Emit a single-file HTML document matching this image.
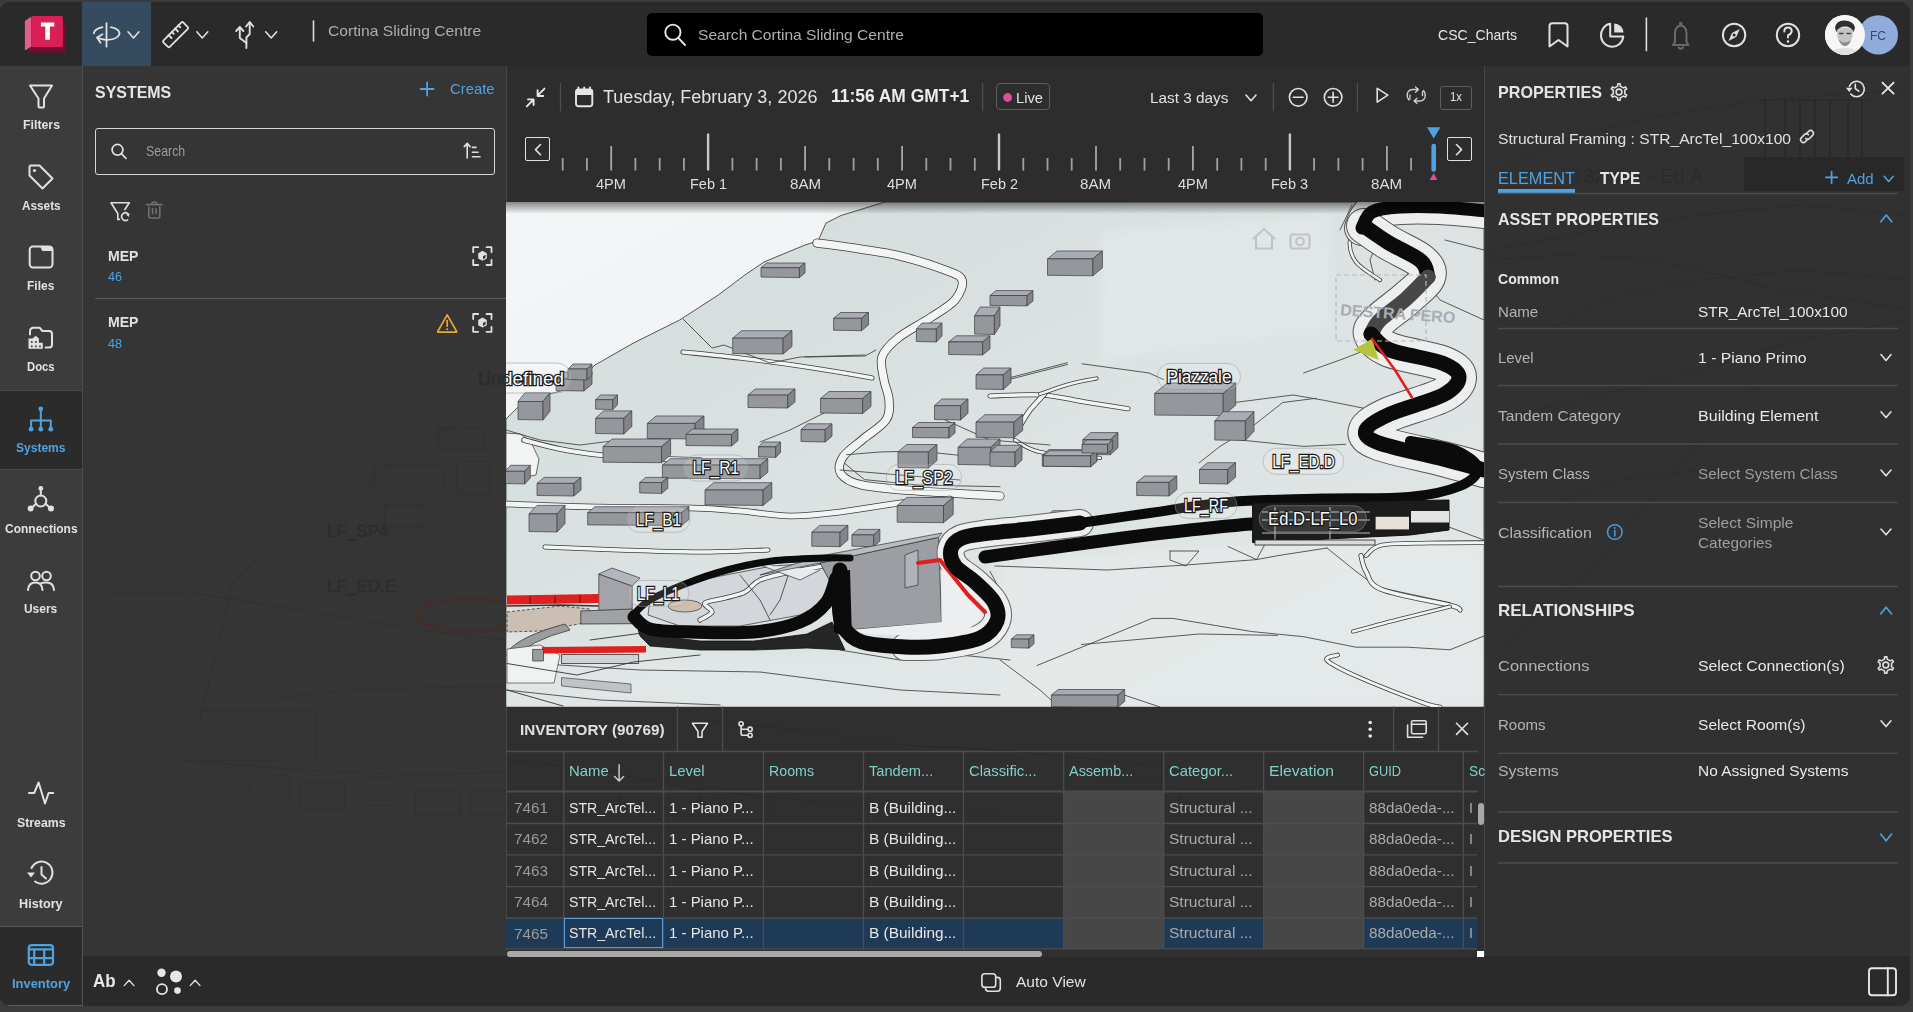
<!DOCTYPE html>
<html><head><meta charset="utf-8">
<style>
*{box-sizing:border-box;margin:0;padding:0}
html,body{width:1913px;height:1012px;overflow:hidden;background:#3c3c3c;font-family:"Liberation Sans",sans-serif}
.a{position:absolute}
.t{position:absolute;white-space:nowrap;line-height:1;transform-origin:0 0}
#win{position:absolute;left:0;top:2px;width:1910px;height:1004px;border-radius:10px;overflow:hidden;background:#2a2a2a}
svg{display:block;overflow:visible}
</style></head>
<body>
<div id="win"><div class="a" style="left:0;top:-2px;width:1910px;height:1012px">
<div class="a" style="left:0px;top:0px;width:1910px;height:66px;background:#2a2a2a;"></div>
<div class="a" style="left:82px;top:2px;width:69px;height:64px;background:#344b60;"></div>
<div class="a" style="left:0px;top:66px;width:82px;height:940px;background:#3c3c3c;"></div>
<div class="a" style="left:83px;top:66px;width:423px;height:890px;background:#353535;"></div>
<div class="a" style="left:81.8px;top:66px;width:1.5px;height:890px;background:#4b4b4b;"></div>
<svg class="a" style="left:506px;top:202px;overflow:hidden" width="978" height="505" viewBox="506 202 978 505"><defs>
<linearGradient id="sky" x1="0" y1="0" x2="1" y2="1"><stop offset="0" stop-color="#f3f5f6"/><stop offset="1" stop-color="#eceff0"/></linearGradient>
<linearGradient id="shadowT" x1="0" y1="0" x2="0" y2="1"><stop offset="0" stop-color="#000" stop-opacity="0.45"/><stop offset="1" stop-color="#000" stop-opacity="0"/></linearGradient>
<linearGradient id="terr" x1="0" y1="0" x2="1" y2="1"><stop offset="0" stop-color="#d3dcdb"/><stop offset="0.5" stop-color="#dce3e2"/><stop offset="1" stop-color="#e2e7e7"/></linearGradient>
<filter id="blur3"><feGaussianBlur stdDeviation="6"/></filter>
</defs><rect x="506" y="202" width="978" height="505" fill="url(#sky)"/><path d="M506.0 419.0 L517.8 407.4 L547.4 394.5 L571.8 388.0 L595.0 365.0 L633.5 343.0 L679.7 320.0 L718.3 295.0 L744.6 275.2 L764.0 262.0 L805.0 245.0 L818.0 241.0 L826.0 223.0 L841.0 215.5 L885.0 202.0 L1484.0 202.0 L1484.0 707.0 L506.0 707.0 Z" fill="url(#terr)" stroke="#444" stroke-width="0.9" /><g filter="url(#blur3)" opacity="0.8"><path d="M1000.0 560.0 L1250.0 545.0 L1484.0 540.0 L1484.0 707.0 L1000.0 707.0 Z" fill="#e6eaea" stroke="none" stroke-width="0.8" /><path d="M1100.0 230.0 L1330.0 215.0 L1330.0 330.0 L1100.0 360.0 Z" fill="#e3e8e8" stroke="none" stroke-width="0.8" /><path d="M506.0 640.0 L700.0 660.0 L1000.0 650.0 L1000.0 707.0 L506.0 707.0 Z" fill="#e2e7e7" stroke="none" stroke-width="0.8" /></g><path d="M506.0 433.0 L520.0 434.0 L530.0 440.0 L539.0 459.0 L536.0 475.0 L520.0 478.0 L506.0 470.0 Z" fill="#f2f4f4" stroke="#444" stroke-width="0.8" /><path d="M817.0 243.0 C824.2 244.0 846.2 246.8 860.0 249.0 C873.8 251.2 885.8 252.5 900.0 256.0 C914.2 259.5 934.7 266.0 945.0 270.0 C955.3 274.0 960.3 275.0 962.0 280.0 C963.7 285.0 960.3 293.7 955.0 300.0 C949.7 306.3 939.5 311.7 930.0 318.0 C920.5 324.3 906.0 331.5 898.0 338.0 C890.0 344.5 884.3 350.0 882.0 357.0 C879.7 364.0 882.8 372.8 884.0 380.0 C885.2 387.2 888.7 393.3 889.0 400.0 C889.3 406.7 890.5 413.3 886.0 420.0 C881.5 426.7 869.2 433.8 862.0 440.0 C854.8 446.2 846.5 451.3 843.0 457.0 C839.5 462.7 837.8 469.3 841.0 474.0 C844.2 478.7 849.2 482.2 862.0 485.0 C874.8 487.8 895.0 489.2 918.0 491.0 C941.0 492.8 986.3 495.2 1000.0 496.0" fill="none" stroke="#3c3c3c" stroke-width="9.1" stroke-linecap="round" stroke-linejoin="round"/><path d="M817.0 243.0 C824.2 244.0 846.2 246.8 860.0 249.0 C873.8 251.2 885.8 252.5 900.0 256.0 C914.2 259.5 934.7 266.0 945.0 270.0 C955.3 274.0 960.3 275.0 962.0 280.0 C963.7 285.0 960.3 293.7 955.0 300.0 C949.7 306.3 939.5 311.7 930.0 318.0 C920.5 324.3 906.0 331.5 898.0 338.0 C890.0 344.5 884.3 350.0 882.0 357.0 C879.7 364.0 882.8 372.8 884.0 380.0 C885.2 387.2 888.7 393.3 889.0 400.0 C889.3 406.7 890.5 413.3 886.0 420.0 C881.5 426.7 869.2 433.8 862.0 440.0 C854.8 446.2 846.5 451.3 843.0 457.0 C839.5 462.7 837.8 469.3 841.0 474.0 C844.2 478.7 849.2 482.2 862.0 485.0 C874.8 487.8 895.0 489.2 918.0 491.0 C941.0 492.8 986.3 495.2 1000.0 496.0" fill="none" stroke="#f3f5f5" stroke-width="7.5" stroke-linecap="round" stroke-linejoin="round"/><path d="M683.0 352.0 C692.5 353.0 720.5 355.7 740.0 358.0 C759.5 360.3 781.7 363.3 800.0 366.0 C818.3 368.7 838.0 372.0 850.0 374.0 C862.0 376.0 868.3 377.3 872.0 378.0" fill="none" stroke="#3c3c3c" stroke-width="5.1" stroke-linecap="round" stroke-linejoin="round"/><path d="M683.0 352.0 C692.5 353.0 720.5 355.7 740.0 358.0 C759.5 360.3 781.7 363.3 800.0 366.0 C818.3 368.7 838.0 372.0 850.0 374.0 C862.0 376.0 868.3 377.3 872.0 378.0" fill="none" stroke="#f3f5f5" stroke-width="3.5" stroke-linecap="round" stroke-linejoin="round"/><path d="M524.0 440.0 C530.0 441.5 547.3 446.5 560.0 449.0 C572.7 451.5 586.7 453.5 600.0 455.0 C613.3 456.5 623.3 457.2 640.0 458.0 C656.7 458.8 690.0 459.7 700.0 460.0" fill="none" stroke="#3c3c3c" stroke-width="5.6" stroke-linecap="round" stroke-linejoin="round"/><path d="M524.0 440.0 C530.0 441.5 547.3 446.5 560.0 449.0 C572.7 451.5 586.7 453.5 600.0 455.0 C613.3 456.5 623.3 457.2 640.0 458.0 C656.7 458.8 690.0 459.7 700.0 460.0" fill="none" stroke="#f3f5f5" stroke-width="4" stroke-linecap="round" stroke-linejoin="round"/><path d="M506.0 504.0 C519.2 504.4 554.0 506.0 585.0 506.7 C616.0 507.4 666.0 507.3 691.8 508.0 C717.6 508.7 723.6 509.7 740.0 511.0 C756.4 512.3 773.3 515.8 790.0 516.0 C806.7 516.2 821.7 514.2 840.0 512.0 C858.3 509.8 881.7 505.2 900.0 503.0 C918.3 500.8 941.7 499.7 950.0 499.0" fill="none" stroke="#3c3c3c" stroke-width="6.6" stroke-linecap="round" stroke-linejoin="round"/><path d="M506.0 504.0 C519.2 504.4 554.0 506.0 585.0 506.7 C616.0 507.4 666.0 507.3 691.8 508.0 C717.6 508.7 723.6 509.7 740.0 511.0 C756.4 512.3 773.3 515.8 790.0 516.0 C806.7 516.2 821.7 514.2 840.0 512.0 C858.3 509.8 881.7 505.2 900.0 503.0 C918.3 500.8 941.7 499.7 950.0 499.0" fill="none" stroke="#f3f5f5" stroke-width="5" stroke-linecap="round" stroke-linejoin="round"/><path d="M845.0 463.6 L864.5 479.6 L918.0 485.0 L1000.0 486.7" fill="none" stroke="#404040" stroke-width="0.85" stroke-linejoin="round" stroke-linecap="round" /><path d="M846.7 454.7 L880.0 452.0 L918.0 451.0 L953.4 454.7 L1000.0 460.0" fill="none" stroke="#404040" stroke-width="0.85" stroke-linejoin="round" stroke-linecap="round" /><path d="M760.0 442.0 L790.0 430.0 L830.0 410.0 L855.0 395.0" fill="none" stroke="#404040" stroke-width="0.85" stroke-linejoin="round" stroke-linecap="round" /><path d="M506.0 430.0 L540.0 440.0 L580.0 445.0 L620.0 440.0" fill="none" stroke="#404040" stroke-width="0.85" stroke-linejoin="round" stroke-linecap="round" /><path d="M545.0 547.0 C557.5 547.5 594.2 549.2 620.0 550.0 C645.8 550.8 675.3 552.0 700.0 552.0 C724.7 552.0 756.7 550.3 768.0 550.0" fill="none" stroke="#3c3c3c" stroke-width="5.1" stroke-linecap="round" stroke-linejoin="round"/><path d="M545.0 547.0 C557.5 547.5 594.2 549.2 620.0 550.0 C645.8 550.8 675.3 552.0 700.0 552.0 C724.7 552.0 756.7 550.3 768.0 550.0" fill="none" stroke="#f3f5f5" stroke-width="3.5" stroke-linecap="round" stroke-linejoin="round"/><path d="M1015.0 440.0 C1019.2 442.0 1025.8 449.0 1040.0 452.0 C1054.2 455.0 1090.0 457.0 1100.0 458.0" fill="none" stroke="#3c3c3c" stroke-width="4.1" stroke-linecap="round" stroke-linejoin="round"/><path d="M1015.0 440.0 C1019.2 442.0 1025.8 449.0 1040.0 452.0 C1054.2 455.0 1090.0 457.0 1100.0 458.0" fill="none" stroke="#f3f5f5" stroke-width="2.5" stroke-linecap="round" stroke-linejoin="round"/><path d="M683.0 319.0 L712.0 348.0 L724.0 345.0 L770.0 363.0 L800.0 357.0 L865.0 355.0" fill="none" stroke="#404040" stroke-width="0.85" stroke-linejoin="round" stroke-linecap="round" /><path d="M805.0 357.0 L865.0 356.0 L876.0 350.0" fill="none" stroke="#404040" stroke-width="0.85" stroke-linejoin="round" stroke-linecap="round" /><path d="M1082.0 363.8 L1149.0 373.0 L1163.5 379.5" fill="none" stroke="#404040" stroke-width="0.85" stroke-linejoin="round" stroke-linecap="round" /><path d="M1011.0 377.4 L1067.4 362.7" fill="none" stroke="#404040" stroke-width="0.85" stroke-linejoin="round" stroke-linecap="round" /><path d="M1011.0 379.0 L1067.4 364.5" fill="none" stroke="#404040" stroke-width="0.85" stroke-linejoin="round" stroke-linecap="round" /><path d="M1234.6 402.5 L1293.0 395.0 L1324.6 400.4 L1366.0 408.7 L1390.0 404.5" fill="none" stroke="#404040" stroke-width="0.85" stroke-linejoin="round" stroke-linecap="round" /><path d="M1253.5 425.5 L1282.7 402.5 L1316.0 398.3" fill="none" stroke="#404040" stroke-width="0.85" stroke-linejoin="round" stroke-linecap="round" /><path d="M1220.0 438.0 L1303.6 446.4 L1345.5 444.3" fill="none" stroke="#404040" stroke-width="0.85" stroke-linejoin="round" stroke-linecap="round" /><path d="M1199.0 463.0 L1220.0 446.4 L1230.5 440.0" fill="none" stroke="#404040" stroke-width="0.85" stroke-linejoin="round" stroke-linecap="round" /><path d="M1303.6 373.0 L1340.0 360.0 L1387.3 341.8" fill="none" stroke="#404040" stroke-width="0.85" stroke-linejoin="round" stroke-linecap="round" /><path d="M995.0 566.0 L1107.6 570.0 L1188.6 564.8 L1256.6 559.6 L1277.5 555.7 L1327.0 548.0" fill="none" stroke="#404040" stroke-width="0.85" stroke-linejoin="round" stroke-linecap="round" /><path d="M1170.0 551.0 L1199.0 551.0 L1186.0 566.0 L1170.0 560.0 L1170.0 551.0" fill="none" stroke="#404040" stroke-width="0.85" stroke-linejoin="round" stroke-linecap="round" /><path d="M1228.0 546.5 L1256.6 559.6 L1264.4 545.2" fill="none" stroke="#404040" stroke-width="0.85" stroke-linejoin="round" stroke-linecap="round" /><path d="M1327.0 548.0 L1356.0 571.4 L1377.0 587.0 L1450.0 602.7 L1458.0 608.0" fill="none" stroke="#404040" stroke-width="0.85" stroke-linejoin="round" stroke-linecap="round" /><path d="M1037.0 665.5 L1094.5 642.0 L1152.0 618.4 L1173.0 618.4 L1251.4 631.5 L1303.6 636.7 L1356.0 647.2 L1408.0 647.2 L1450.0 649.8 L1484.0 636.0" fill="none" stroke="#404040" stroke-width="0.85" stroke-linejoin="round" stroke-linecap="round" /><path d="M1081.5 644.5 L1199.0 634.0 L1277.5 635.4" fill="none" stroke="#404040" stroke-width="0.85" stroke-linejoin="round" stroke-linecap="round" /><path d="M990.0 571.4 L1000.0 590.0" fill="none" stroke="#404040" stroke-width="0.85" stroke-linejoin="round" stroke-linecap="round" /><path d="M840.0 650.0 L900.0 660.0 L960.0 655.0 L1010.0 660.0" fill="none" stroke="#404040" stroke-width="0.85" stroke-linejoin="round" stroke-linecap="round" /><path d="M506.0 655.0 L560.0 665.0 L640.0 670.0 L760.0 672.0 L900.0 690.0 L1000.0 695.0" fill="none" stroke="#404040" stroke-width="0.85" stroke-linejoin="round" stroke-linecap="round" /><path d="M506.0 690.0 L600.0 700.0 L720.0 705.0" fill="none" stroke="#404040" stroke-width="0.85" stroke-linejoin="round" stroke-linecap="round" /><path d="M945.0 420.0 L990.0 440.0 L1050.0 445.0" fill="none" stroke="#404040" stroke-width="0.85" stroke-linejoin="round" stroke-linecap="round" /><path d="M840.0 470.0 L900.0 475.0 L960.0 480.0" fill="none" stroke="#404040" stroke-width="0.85" stroke-linejoin="round" stroke-linecap="round" /><path d="M1000.0 660.0 L1040.0 690.0 L1051.0 700.0" fill="none" stroke="#404040" stroke-width="0.85" stroke-linejoin="round" stroke-linecap="round" /><path d="M1124.0 695.0 L1160.0 707.0" fill="none" stroke="#404040" stroke-width="0.85" stroke-linejoin="round" stroke-linecap="round" /><path d="M1460.0 470.0 L1484.0 480.0" fill="none" stroke="#404040" stroke-width="0.85" stroke-linejoin="round" stroke-linecap="round" /><path d="M1395.0 210.0 L1380.0 235.0 L1370.0 260.0 L1375.0 280.0" fill="none" stroke="#404040" stroke-width="0.85" stroke-linejoin="round" stroke-linecap="round" /><path d="M1340.0 230.0 L1352.0 205.0" fill="none" stroke="#404040" stroke-width="0.85" stroke-linejoin="round" stroke-linecap="round" /><path d="M1445.0 240.0 L1484.0 250.0" fill="none" stroke="#404040" stroke-width="0.85" stroke-linejoin="round" stroke-linecap="round" /><path d="M1400.0 250.0 L1440.0 300.0 L1484.0 320.0" fill="none" stroke="#404040" stroke-width="0.85" stroke-linejoin="round" stroke-linecap="round" /><path d="M1430.0 520.0 L1484.0 540.0" fill="none" stroke="#404040" stroke-width="0.85" stroke-linejoin="round" stroke-linecap="round" /><path d="M1361.0 555.7 C1361.8 558.3 1362.5 565.7 1366.0 571.4 C1369.5 577.1 1368.0 584.1 1382.0 589.7 C1396.0 595.4 1437.0 601.9 1450.0 605.3 C1463.0 608.7 1458.3 609.2 1460.0 610.0" fill="none" stroke="#3c3c3c" stroke-width="5.1" stroke-linecap="round" stroke-linejoin="round"/><path d="M1361.0 555.7 C1361.8 558.3 1362.5 565.7 1366.0 571.4 C1369.5 577.1 1368.0 584.1 1382.0 589.7 C1396.0 595.4 1437.0 601.9 1450.0 605.3 C1463.0 608.7 1458.3 609.2 1460.0 610.0" fill="none" stroke="#f3f5f5" stroke-width="3.5" stroke-linecap="round" stroke-linejoin="round"/><path d="M1353.0 631.5 C1360.8 629.4 1383.8 623.1 1400.0 619.0 C1416.2 614.9 1441.7 608.7 1450.0 606.6" fill="none" stroke="#3c3c3c" stroke-width="4.1" stroke-linecap="round" stroke-linejoin="round"/><path d="M1353.0 631.5 C1360.8 629.4 1383.8 623.1 1400.0 619.0 C1416.2 614.9 1441.7 608.7 1450.0 606.6" fill="none" stroke="#f3f5f5" stroke-width="2.5" stroke-linecap="round" stroke-linejoin="round"/><path d="M1366.0 555.7 C1368.7 553.9 1371.3 547.1 1382.0 545.0 C1392.7 542.9 1412.0 543.4 1430.0 543.0 C1448.0 542.6 1480.0 542.7 1490.0 542.6" fill="none" stroke="#3c3c3c" stroke-width="4.6" stroke-linecap="round" stroke-linejoin="round"/><path d="M1366.0 555.7 C1368.7 553.9 1371.3 547.1 1382.0 545.0 C1392.7 542.9 1412.0 543.4 1430.0 543.0 C1448.0 542.6 1480.0 542.7 1490.0 542.6" fill="none" stroke="#f3f5f5" stroke-width="3" stroke-linecap="round" stroke-linejoin="round"/><path d="M1337.6 655.0 C1335.8 655.9 1323.9 656.7 1327.0 660.2 C1330.1 663.7 1340.3 669.0 1356.0 676.0 C1371.7 683.0 1407.0 696.8 1421.0 702.0 C1435.0 707.2 1436.8 706.2 1440.0 707.0" fill="none" stroke="#3c3c3c" stroke-width="4.6" stroke-linecap="round" stroke-linejoin="round"/><path d="M1337.6 655.0 C1335.8 655.9 1323.9 656.7 1327.0 660.2 C1330.1 663.7 1340.3 669.0 1356.0 676.0 C1371.7 683.0 1407.0 696.8 1421.0 702.0 C1435.0 707.2 1436.8 706.2 1440.0 707.0" fill="none" stroke="#f3f5f5" stroke-width="3" stroke-linecap="round" stroke-linejoin="round"/><path d="M990.0 396.0 C998.7 395.8 1026.5 394.0 1042.3 395.0 C1058.1 396.0 1070.7 399.7 1085.0 402.0 C1099.3 404.3 1120.8 407.6 1128.0 408.7" fill="none" stroke="#3c3c3c" stroke-width="5.1" stroke-linecap="round" stroke-linejoin="round"/><path d="M990.0 396.0 C998.7 395.8 1026.5 394.0 1042.3 395.0 C1058.1 396.0 1070.7 399.7 1085.0 402.0 C1099.3 404.3 1120.8 407.6 1128.0 408.7" fill="none" stroke="#f3f5f5" stroke-width="3.5" stroke-linecap="round" stroke-linejoin="round"/><path d="M1044.4 394.0 C1042.0 396.7 1033.8 405.1 1030.0 410.0 C1026.2 414.9 1022.8 421.2 1021.4 423.4" fill="none" stroke="#3c3c3c" stroke-width="5.6" stroke-linecap="round" stroke-linejoin="round"/><path d="M1044.4 394.0 C1042.0 396.7 1033.8 405.1 1030.0 410.0 C1026.2 414.9 1022.8 421.2 1021.4 423.4" fill="none" stroke="#f3f5f5" stroke-width="4" stroke-linecap="round" stroke-linejoin="round"/><path d="M1040.0 394.0 C1045.0 392.3 1060.6 386.6 1070.0 384.0 C1079.4 381.4 1092.2 379.3 1096.6 378.4" fill="none" stroke="#3c3c3c" stroke-width="4.1" stroke-linecap="round" stroke-linejoin="round"/><path d="M1040.0 394.0 C1045.0 392.3 1060.6 386.6 1070.0 384.0 C1079.4 381.4 1092.2 379.3 1096.6 378.4" fill="none" stroke="#f3f5f5" stroke-width="2.5" stroke-linecap="round" stroke-linejoin="round"/><path d="M1361.0 223.0 C1359.2 225.8 1350.8 233.5 1350.0 240.0 C1349.2 246.5 1351.0 255.3 1356.0 262.0 C1361.0 268.7 1376.0 277.0 1380.0 280.0" fill="none" stroke="#3c3c3c" stroke-width="4.1" stroke-linecap="round" stroke-linejoin="round"/><path d="M1361.0 223.0 C1359.2 225.8 1350.8 233.5 1350.0 240.0 C1349.2 246.5 1351.0 255.3 1356.0 262.0 C1361.0 268.7 1376.0 277.0 1380.0 280.0" fill="none" stroke="#f3f5f5" stroke-width="2.5" stroke-linecap="round" stroke-linejoin="round"/><path d="M556.0 379.0 L564.0 372.0 L592.0 372.0 L584.0 379.0 Z" fill="#a9acb4" stroke="#3c3c3c" stroke-width="0.7" /><path d="M556.0 379.0 L584.0 379.0 L584.0 391.0 L556.0 390.5 Z" fill="#95979d" stroke="#3c3c3c" stroke-width="0.7" /><path d="M584.0 379.0 L592.0 372.0 L592.0 384.0 L584.0 391.0 Z" fill="#828489" stroke="#3c3c3c" stroke-width="0.7" /><path d="M568.0 369.0 L573.0 364.0 L592.0 364.0 L587.0 369.0 Z" fill="#a9acb4" stroke="#3c3c3c" stroke-width="0.7" /><path d="M568.0 369.0 L587.0 369.0 L587.0 380.0 L568.0 379.5 Z" fill="#95979d" stroke="#3c3c3c" stroke-width="0.7" /><path d="M587.0 369.0 L592.0 364.0 L592.0 375.0 L587.0 380.0 Z" fill="#828489" stroke="#3c3c3c" stroke-width="0.7" /><path d="M761.0 267.7 L766.6 263.0 L805.0 263.0 L799.4 267.7 Z" fill="#a9acb4" stroke="#3c3c3c" stroke-width="0.7" /><path d="M761.0 267.7 L799.4 267.7 L799.4 277.6 L761.0 277.1 Z" fill="#95979d" stroke="#3c3c3c" stroke-width="0.7" /><path d="M799.4 267.7 L805.0 263.0 L805.0 272.9 L799.4 277.6 Z" fill="#828489" stroke="#3c3c3c" stroke-width="0.7" /><path d="M833.6 318.3 L840.6 312.5 L868.5 312.5 L861.5 318.3 Z" fill="#a9acb4" stroke="#3c3c3c" stroke-width="0.7" /><path d="M833.6 318.3 L861.5 318.3 L861.5 330.7 L833.6 330.2 Z" fill="#95979d" stroke="#3c3c3c" stroke-width="0.7" /><path d="M861.5 318.3 L868.5 312.5 L868.5 324.9 L861.5 330.7 Z" fill="#828489" stroke="#3c3c3c" stroke-width="0.7" /><path d="M732.7 338.2 L741.6 330.7 L792.0 330.7 L783.1 338.2 Z" fill="#a9acb4" stroke="#3c3c3c" stroke-width="0.7" /><path d="M732.7 338.2 L783.1 338.2 L783.1 354.0 L732.7 353.5 Z" fill="#95979d" stroke="#3c3c3c" stroke-width="0.7" /><path d="M783.1 338.2 L792.0 330.7 L792.0 346.5 L783.1 354.0 Z" fill="#828489" stroke="#3c3c3c" stroke-width="0.7" /><path d="M518.0 401.5 L525.0 392.8 L550.0 392.8 L543.0 401.5 Z" fill="#a9acb4" stroke="#3c3c3c" stroke-width="0.7" /><path d="M518.0 401.5 L543.0 401.5 L543.0 420.0 L518.0 419.5 Z" fill="#95979d" stroke="#3c3c3c" stroke-width="0.7" /><path d="M543.0 401.5 L550.0 392.8 L550.0 411.3 L543.0 420.0 Z" fill="#828489" stroke="#3c3c3c" stroke-width="0.7" /><path d="M595.6 399.7 L600.4 395.0 L617.5 395.0 L612.7 399.7 Z" fill="#a9acb4" stroke="#3c3c3c" stroke-width="0.7" /><path d="M595.6 399.7 L612.7 399.7 L612.7 409.6 L595.6 409.1 Z" fill="#95979d" stroke="#3c3c3c" stroke-width="0.7" /><path d="M612.7 399.7 L617.5 395.0 L617.5 404.9 L612.7 409.6 Z" fill="#828489" stroke="#3c3c3c" stroke-width="0.7" /><path d="M595.6 418.3 L603.6 410.9 L631.8 410.9 L623.8 418.3 Z" fill="#a9acb4" stroke="#3c3c3c" stroke-width="0.7" /><path d="M595.6 418.3 L623.8 418.3 L623.8 434.0 L595.6 433.5 Z" fill="#95979d" stroke="#3c3c3c" stroke-width="0.7" /><path d="M623.8 418.3 L631.8 410.9 L631.8 426.6 L623.8 434.0 Z" fill="#828489" stroke="#3c3c3c" stroke-width="0.7" /><path d="M647.3 423.4 L656.1 416.0 L704.0 416.0 L695.2 423.4 Z" fill="#a9acb4" stroke="#3c3c3c" stroke-width="0.7" /><path d="M647.3 423.4 L695.2 423.4 L695.2 439.0 L647.3 438.5 Z" fill="#95979d" stroke="#3c3c3c" stroke-width="0.7" /><path d="M695.2 423.4 L704.0 416.0 L704.0 431.6 L695.2 439.0 Z" fill="#828489" stroke="#3c3c3c" stroke-width="0.7" /><path d="M686.0 434.4 L692.5 429.0 L738.0 429.0 L731.5 434.4 Z" fill="#a9acb4" stroke="#3c3c3c" stroke-width="0.7" /><path d="M686.0 434.4 L731.5 434.4 L731.5 446.0 L686.0 445.5 Z" fill="#95979d" stroke="#3c3c3c" stroke-width="0.7" /><path d="M731.5 434.4 L738.0 429.0 L738.0 440.6 L731.5 446.0 Z" fill="#828489" stroke="#3c3c3c" stroke-width="0.7" /><path d="M748.0 395.1 L755.3 389.0 L795.0 389.0 L787.7 395.1 Z" fill="#a9acb4" stroke="#3c3c3c" stroke-width="0.7" /><path d="M748.0 395.1 L787.7 395.1 L787.7 408.0 L748.0 407.5 Z" fill="#95979d" stroke="#3c3c3c" stroke-width="0.7" /><path d="M787.7 395.1 L795.0 389.0 L795.0 401.9 L787.7 408.0 Z" fill="#828489" stroke="#3c3c3c" stroke-width="0.7" /><path d="M820.6 398.5 L829.0 391.5 L871.0 391.5 L862.6 398.5 Z" fill="#a9acb4" stroke="#3c3c3c" stroke-width="0.7" /><path d="M820.6 398.5 L862.6 398.5 L862.6 413.5 L820.6 413.0 Z" fill="#95979d" stroke="#3c3c3c" stroke-width="0.7" /><path d="M862.6 398.5 L871.0 391.5 L871.0 406.5 L862.6 413.5 Z" fill="#828489" stroke="#3c3c3c" stroke-width="0.7" /><path d="M801.0 429.6 L807.8 423.8 L832.0 423.8 L825.2 429.6 Z" fill="#a9acb4" stroke="#3c3c3c" stroke-width="0.7" /><path d="M801.0 429.6 L825.2 429.6 L825.2 442.0 L801.0 441.5 Z" fill="#95979d" stroke="#3c3c3c" stroke-width="0.7" /><path d="M825.2 429.6 L832.0 423.8 L832.0 436.2 L825.2 442.0 Z" fill="#828489" stroke="#3c3c3c" stroke-width="0.7" /><path d="M916.4 329.1 L922.0 323.0 L942.0 323.0 L936.4 329.1 Z" fill="#a9acb4" stroke="#3c3c3c" stroke-width="0.7" /><path d="M916.4 329.1 L936.4 329.1 L936.4 342.0 L916.4 341.5 Z" fill="#95979d" stroke="#3c3c3c" stroke-width="0.7" /><path d="M936.4 329.1 L942.0 323.0 L942.0 335.9 L936.4 342.0 Z" fill="#828489" stroke="#3c3c3c" stroke-width="0.7" /><path d="M948.7 341.9 L956.1 335.8 L990.0 335.8 L982.6 341.9 Z" fill="#a9acb4" stroke="#3c3c3c" stroke-width="0.7" /><path d="M948.7 341.9 L982.6 341.9 L982.6 355.0 L948.7 354.5 Z" fill="#95979d" stroke="#3c3c3c" stroke-width="0.7" /><path d="M982.6 341.9 L990.0 335.8 L990.0 348.9 L982.6 355.0 Z" fill="#828489" stroke="#3c3c3c" stroke-width="0.7" /><path d="M974.6 315.8 L980.2 307.0 L1000.0 307.0 L994.4 315.8 Z" fill="#a9acb4" stroke="#3c3c3c" stroke-width="0.7" /><path d="M974.6 315.8 L994.4 315.8 L994.4 334.5 L974.6 334.0 Z" fill="#95979d" stroke="#3c3c3c" stroke-width="0.7" /><path d="M994.4 315.8 L1000.0 307.0 L1000.0 325.7 L994.4 334.5 Z" fill="#828489" stroke="#3c3c3c" stroke-width="0.7" /><path d="M990.0 295.5 L995.9 290.6 L1033.0 290.6 L1027.1 295.5 Z" fill="#a9acb4" stroke="#3c3c3c" stroke-width="0.7" /><path d="M990.0 295.5 L1027.1 295.5 L1027.1 305.9 L990.0 305.4 Z" fill="#95979d" stroke="#3c3c3c" stroke-width="0.7" /><path d="M1027.1 295.5 L1033.0 290.6 L1033.0 301.0 L1027.1 305.9 Z" fill="#828489" stroke="#3c3c3c" stroke-width="0.7" /><path d="M976.0 374.9 L983.7 368.0 L1011.0 368.0 L1003.3 374.9 Z" fill="#a9acb4" stroke="#3c3c3c" stroke-width="0.7" /><path d="M976.0 374.9 L1003.3 374.9 L1003.3 389.5 L976.0 389.0 Z" fill="#95979d" stroke="#3c3c3c" stroke-width="0.7" /><path d="M1003.3 374.9 L1011.0 368.0 L1011.0 382.6 L1003.3 389.5 Z" fill="#828489" stroke="#3c3c3c" stroke-width="0.7" /><path d="M934.5 405.7 L941.9 399.0 L968.0 399.0 L960.6 405.7 Z" fill="#a9acb4" stroke="#3c3c3c" stroke-width="0.7" /><path d="M934.5 405.7 L960.6 405.7 L960.6 420.0 L934.5 419.5 Z" fill="#95979d" stroke="#3c3c3c" stroke-width="0.7" /><path d="M960.6 405.7 L968.0 399.0 L968.0 413.3 L960.6 420.0 Z" fill="#828489" stroke="#3c3c3c" stroke-width="0.7" /><path d="M912.5 427.5 L918.5 422.5 L955.0 422.5 L949.0 427.5 Z" fill="#a9acb4" stroke="#3c3c3c" stroke-width="0.7" /><path d="M912.5 427.5 L949.0 427.5 L949.0 438.0 L912.5 437.5 Z" fill="#95979d" stroke="#3c3c3c" stroke-width="0.7" /><path d="M949.0 427.5 L955.0 422.5 L955.0 433.0 L949.0 438.0 Z" fill="#828489" stroke="#3c3c3c" stroke-width="0.7" /><path d="M976.0 422.1 L984.9 414.7 L1022.7 414.7 L1013.8 422.1 Z" fill="#a9acb4" stroke="#3c3c3c" stroke-width="0.7" /><path d="M976.0 422.1 L1013.8 422.1 L1013.8 437.8 L976.0 437.3 Z" fill="#95979d" stroke="#3c3c3c" stroke-width="0.7" /><path d="M1013.8 422.1 L1022.7 414.7 L1022.7 430.4 L1013.8 437.8 Z" fill="#828489" stroke="#3c3c3c" stroke-width="0.7" /><path d="M898.0 452.0 L906.6 444.5 L937.0 444.5 L928.4 452.0 Z" fill="#a9acb4" stroke="#3c3c3c" stroke-width="0.7" /><path d="M898.0 452.0 L928.4 452.0 L928.4 468.0 L898.0 467.5 Z" fill="#95979d" stroke="#3c3c3c" stroke-width="0.7" /><path d="M928.4 452.0 L937.0 444.5 L937.0 460.5 L928.4 468.0 Z" fill="#828489" stroke="#3c3c3c" stroke-width="0.7" /><path d="M958.0 447.3 L967.2 439.0 L1000.0 439.0 L990.8 447.3 Z" fill="#a9acb4" stroke="#3c3c3c" stroke-width="0.7" /><path d="M958.0 447.3 L990.8 447.3 L990.8 465.0 L958.0 464.5 Z" fill="#95979d" stroke="#3c3c3c" stroke-width="0.7" /><path d="M990.8 447.3 L1000.0 439.0 L1000.0 456.7 L990.8 465.0 Z" fill="#828489" stroke="#3c3c3c" stroke-width="0.7" /><path d="M758.5 446.9 L763.3 442.0 L780.5 442.0 L775.7 446.9 Z" fill="#a9acb4" stroke="#3c3c3c" stroke-width="0.7" /><path d="M758.5 446.9 L775.7 446.9 L775.7 457.4 L758.5 456.9 Z" fill="#95979d" stroke="#3c3c3c" stroke-width="0.7" /><path d="M775.7 446.9 L780.5 442.0 L780.5 452.5 L775.7 457.4 Z" fill="#828489" stroke="#3c3c3c" stroke-width="0.7" /><path d="M603.0 446.6 L612.1 439.0 L670.6 439.0 L661.5 446.6 Z" fill="#a9acb4" stroke="#3c3c3c" stroke-width="0.7" /><path d="M603.0 446.6 L661.5 446.6 L661.5 462.7 L603.0 462.2 Z" fill="#95979d" stroke="#3c3c3c" stroke-width="0.7" /><path d="M661.5 446.6 L670.6 439.0 L670.6 455.1 L661.5 462.7 Z" fill="#828489" stroke="#3c3c3c" stroke-width="0.7" /><path d="M662.4 465.1 L670.1 458.7 L767.8 458.7 L760.1 465.1 Z" fill="#a9acb4" stroke="#3c3c3c" stroke-width="0.7" /><path d="M662.4 465.1 L760.1 465.1 L760.1 478.7 L662.4 478.2 Z" fill="#95979d" stroke="#3c3c3c" stroke-width="0.7" /><path d="M760.1 465.1 L767.8 458.7 L767.8 472.3 L760.1 478.7 Z" fill="#828489" stroke="#3c3c3c" stroke-width="0.7" /><path d="M537.0 483.4 L544.1 477.4 L581.0 477.4 L573.9 483.4 Z" fill="#a9acb4" stroke="#3c3c3c" stroke-width="0.7" /><path d="M537.0 483.4 L573.9 483.4 L573.9 496.0 L537.0 495.5 Z" fill="#95979d" stroke="#3c3c3c" stroke-width="0.7" /><path d="M573.9 483.4 L581.0 477.4 L581.0 490.0 L573.9 496.0 Z" fill="#828489" stroke="#3c3c3c" stroke-width="0.7" /><path d="M639.7 482.5 L645.8 477.4 L667.8 477.4 L661.7 482.5 Z" fill="#a9acb4" stroke="#3c3c3c" stroke-width="0.7" /><path d="M639.7 482.5 L661.7 482.5 L661.7 493.4 L639.7 492.9 Z" fill="#95979d" stroke="#3c3c3c" stroke-width="0.7" /><path d="M661.7 482.5 L667.8 477.4 L667.8 488.3 L661.7 493.4 Z" fill="#828489" stroke="#3c3c3c" stroke-width="0.7" /><path d="M705.0 490.0 L713.7 482.7 L771.8 482.7 L763.1 490.0 Z" fill="#a9acb4" stroke="#3c3c3c" stroke-width="0.7" /><path d="M705.0 490.0 L763.1 490.0 L763.1 505.4 L705.0 504.9 Z" fill="#95979d" stroke="#3c3c3c" stroke-width="0.7" /><path d="M763.1 490.0 L771.8 482.7 L771.8 498.1 L763.1 505.4 Z" fill="#828489" stroke="#3c3c3c" stroke-width="0.7" /><path d="M505.0 471.3 L510.6 465.3 L530.3 465.3 L524.7 471.3 Z" fill="#a9acb4" stroke="#3c3c3c" stroke-width="0.7" /><path d="M505.0 471.3 L524.7 471.3 L524.7 484.0 L505.0 483.5 Z" fill="#95979d" stroke="#3c3c3c" stroke-width="0.7" /><path d="M524.7 471.3 L530.3 465.3 L530.3 478.0 L524.7 484.0 Z" fill="#828489" stroke="#3c3c3c" stroke-width="0.7" /><path d="M529.0 513.9 L536.9 505.4 L565.0 505.4 L557.1 513.9 Z" fill="#a9acb4" stroke="#3c3c3c" stroke-width="0.7" /><path d="M529.0 513.9 L557.1 513.9 L557.1 532.0 L529.0 531.5 Z" fill="#95979d" stroke="#3c3c3c" stroke-width="0.7" /><path d="M557.1 513.9 L565.0 505.4 L565.0 523.5 L557.1 532.0 Z" fill="#828489" stroke="#3c3c3c" stroke-width="0.7" /><path d="M587.7 512.7 L594.9 506.7 L689.0 506.7 L681.8 512.7 Z" fill="#a9acb4" stroke="#3c3c3c" stroke-width="0.7" /><path d="M587.7 512.7 L681.8 512.7 L681.8 525.4 L587.7 524.9 Z" fill="#95979d" stroke="#3c3c3c" stroke-width="0.7" /><path d="M681.8 512.7 L689.0 506.7 L689.0 519.4 L681.8 525.4 Z" fill="#828489" stroke="#3c3c3c" stroke-width="0.7" /><path d="M897.2 505.5 L906.9 497.4 L953.2 497.4 L943.5 505.5 Z" fill="#a9acb4" stroke="#3c3c3c" stroke-width="0.7" /><path d="M897.2 505.5 L943.5 505.5 L943.5 522.7 L897.2 522.2 Z" fill="#95979d" stroke="#3c3c3c" stroke-width="0.7" /><path d="M943.5 505.5 L953.2 497.4 L953.2 514.6 L943.5 522.7 Z" fill="#828489" stroke="#3c3c3c" stroke-width="0.7" /><path d="M811.8 532.2 L819.7 525.4 L847.9 525.4 L840.0 532.2 Z" fill="#a9acb4" stroke="#3c3c3c" stroke-width="0.7" /><path d="M811.8 532.2 L840.0 532.2 L840.0 546.7 L811.8 546.2 Z" fill="#95979d" stroke="#3c3c3c" stroke-width="0.7" /><path d="M840.0 532.2 L847.9 525.4 L847.9 539.9 L840.0 546.7 Z" fill="#828489" stroke="#3c3c3c" stroke-width="0.7" /><path d="M851.9 534.9 L858.1 529.4 L879.9 529.4 L873.7 534.9 Z" fill="#a9acb4" stroke="#3c3c3c" stroke-width="0.7" /><path d="M851.9 534.9 L873.7 534.9 L873.7 546.7 L851.9 546.2 Z" fill="#95979d" stroke="#3c3c3c" stroke-width="0.7" /><path d="M873.7 534.9 L879.9 529.4 L879.9 541.2 L873.7 546.7 Z" fill="#828489" stroke="#3c3c3c" stroke-width="0.7" /><path d="M1047.5 258.9 L1057.0 251.0 L1102.4 251.0 L1092.9 258.9 Z" fill="#a9acb4" stroke="#3c3c3c" stroke-width="0.7" /><path d="M1047.5 258.9 L1092.9 258.9 L1092.9 275.8 L1047.5 275.3 Z" fill="#95979d" stroke="#3c3c3c" stroke-width="0.7" /><path d="M1092.9 258.9 L1102.4 251.0 L1102.4 267.9 L1092.9 275.8 Z" fill="#828489" stroke="#3c3c3c" stroke-width="0.7" /><path d="M1154.7 393.4 L1167.2 383.0 L1235.7 383.0 L1223.2 393.4 Z" fill="#a9acb4" stroke="#3c3c3c" stroke-width="0.7" /><path d="M1154.7 393.4 L1223.2 393.4 L1223.2 415.6 L1154.7 415.1 Z" fill="#95979d" stroke="#3c3c3c" stroke-width="0.7" /><path d="M1223.2 393.4 L1235.7 383.0 L1235.7 405.2 L1223.2 415.6 Z" fill="#828489" stroke="#3c3c3c" stroke-width="0.7" /><path d="M1214.8 420.9 L1223.4 411.7 L1254.0 411.7 L1245.4 420.9 Z" fill="#a9acb4" stroke="#3c3c3c" stroke-width="0.7" /><path d="M1214.8 420.9 L1245.4 420.9 L1245.4 440.5 L1214.8 440.0 Z" fill="#95979d" stroke="#3c3c3c" stroke-width="0.7" /><path d="M1245.4 420.9 L1254.0 411.7 L1254.0 431.3 L1245.4 440.5 Z" fill="#828489" stroke="#3c3c3c" stroke-width="0.7" /><path d="M1082.8 439.7 L1090.5 432.6 L1118.0 432.6 L1110.3 439.7 Z" fill="#a9acb4" stroke="#3c3c3c" stroke-width="0.7" /><path d="M1082.8 439.7 L1110.3 439.7 L1110.3 454.8 L1082.8 454.3 Z" fill="#95979d" stroke="#3c3c3c" stroke-width="0.7" /><path d="M1110.3 439.7 L1118.0 432.6 L1118.0 447.7 L1110.3 454.8 Z" fill="#828489" stroke="#3c3c3c" stroke-width="0.7" /><path d="M1042.3 455.1 L1048.9 449.6 L1097.0 449.6 L1090.4 455.1 Z" fill="#a9acb4" stroke="#3c3c3c" stroke-width="0.7" /><path d="M1042.3 455.1 L1090.4 455.1 L1090.4 466.7 L1042.3 466.2 Z" fill="#95979d" stroke="#3c3c3c" stroke-width="0.7" /><path d="M1090.4 455.1 L1097.0 449.6 L1097.0 461.2 L1090.4 466.7 Z" fill="#828489" stroke="#3c3c3c" stroke-width="0.7" /><path d="M1043.4 455.8 L1049.5 450.7 L1096.7 450.7 L1090.6 455.8 Z" fill="#a9acb4" stroke="#3c3c3c" stroke-width="0.7" /><path d="M1043.4 455.8 L1090.6 455.8 L1090.6 466.7 L1043.4 466.2 Z" fill="#95979d" stroke="#3c3c3c" stroke-width="0.7" /><path d="M1090.6 455.8 L1096.7 450.7 L1096.7 461.6 L1090.6 466.7 Z" fill="#828489" stroke="#3c3c3c" stroke-width="0.7" /><path d="M1136.7 482.4 L1144.4 476.0 L1176.8 476.0 L1169.1 482.4 Z" fill="#a9acb4" stroke="#3c3c3c" stroke-width="0.7" /><path d="M1136.7 482.4 L1169.1 482.4 L1169.1 496.0 L1136.7 495.5 Z" fill="#95979d" stroke="#3c3c3c" stroke-width="0.7" /><path d="M1169.1 482.4 L1176.8 476.0 L1176.8 489.6 L1169.1 496.0 Z" fill="#828489" stroke="#3c3c3c" stroke-width="0.7" /><path d="M1199.5 469.5 L1207.4 462.7 L1235.5 462.7 L1227.6 469.5 Z" fill="#a9acb4" stroke="#3c3c3c" stroke-width="0.7" /><path d="M1199.5 469.5 L1227.6 469.5 L1227.6 484.0 L1199.5 483.5 Z" fill="#95979d" stroke="#3c3c3c" stroke-width="0.7" /><path d="M1227.6 469.5 L1235.5 462.7 L1235.5 477.2 L1227.6 484.0 Z" fill="#828489" stroke="#3c3c3c" stroke-width="0.7" /><path d="M1048.7 514.1 L1052.8 510.7 L1084.7 510.7 L1080.6 514.1 Z" fill="#a9acb4" stroke="#3c3c3c" stroke-width="0.7" /><path d="M1048.7 514.1 L1080.6 514.1 L1080.6 521.4 L1048.7 520.9 Z" fill="#95979d" stroke="#3c3c3c" stroke-width="0.7" /><path d="M1080.6 514.1 L1084.7 510.7 L1084.7 518.0 L1080.6 521.4 Z" fill="#828489" stroke="#3c3c3c" stroke-width="0.7" /><path d="M1011.3 639.1 L1016.3 634.8 L1034.0 634.8 L1029.0 639.1 Z" fill="#a9acb4" stroke="#3c3c3c" stroke-width="0.7" /><path d="M1011.3 639.1 L1029.0 639.1 L1029.0 648.1 L1011.3 647.6 Z" fill="#95979d" stroke="#3c3c3c" stroke-width="0.7" /><path d="M1029.0 639.1 L1034.0 634.8 L1034.0 643.8 L1029.0 648.1 Z" fill="#828489" stroke="#3c3c3c" stroke-width="0.7" /><path d="M1051.4 695.1 L1058.1 689.5 L1124.7 689.5 L1118.0 695.1 Z" fill="#a9acb4" stroke="#3c3c3c" stroke-width="0.7" /><path d="M1051.4 695.1 L1118.0 695.1 L1118.0 707.0 L1051.4 706.5 Z" fill="#95979d" stroke="#3c3c3c" stroke-width="0.7" /><path d="M1118.0 695.1 L1124.7 689.5 L1124.7 701.4 L1118.0 707.0 Z" fill="#828489" stroke="#3c3c3c" stroke-width="0.7" /><path d="M990.0 452.1 L997.0 445.3 L1022.0 445.3 L1015.0 452.1 Z" fill="#a9acb4" stroke="#3c3c3c" stroke-width="0.7" /><path d="M990.0 452.1 L1015.0 452.1 L1015.0 466.7 L990.0 466.2 Z" fill="#95979d" stroke="#3c3c3c" stroke-width="0.7" /><path d="M1015.0 452.1 L1022.0 445.3 L1022.0 459.9 L1015.0 466.7 Z" fill="#828489" stroke="#3c3c3c" stroke-width="0.7" /><path d="M1082.0 444.3 L1087.1 440.0 L1112.7 440.0 L1107.6 444.3 Z" fill="#a9acb4" stroke="#3c3c3c" stroke-width="0.7" /><path d="M1082.0 444.3 L1107.6 444.3 L1107.6 453.3 L1082.0 452.8 Z" fill="#95979d" stroke="#3c3c3c" stroke-width="0.7" /><path d="M1107.6 444.3 L1112.7 440.0 L1112.7 449.0 L1107.6 453.3 Z" fill="#828489" stroke="#3c3c3c" stroke-width="0.7" /><path d="M598.8 574.0 L632.2 586.0 L632.2 617.0 L598.8 612.0 Z" fill="#a2a4a9" stroke="#333" stroke-width="0.7" /><path d="M598.8 574.0 L612.0 568.0 L640.0 578.0 L632.2 586.0 Z" fill="#b3b6bc" stroke="#333" stroke-width="0.7" /><path d="M507.0 612.0 L560.0 606.0 L590.0 609.0 L590.0 622.0 L540.0 631.0 L507.0 632.0 Z" fill="#cbbfb3" stroke="#333" stroke-width="0.8" stroke-dasharray="3 2"/><path d="M580.8 611.0 L632.0 609.0 L632.0 623.7 L580.8 624.0 Z" fill="#a0a2a6" stroke="#333" stroke-width="0.8" /><path d="M507 652 Q520 636 565 624 L570 630 Q530 640 512 660 Z" fill="#9a9ca0" stroke="#333" stroke-width="0.8"/><path d="M507.0 649.0 L540.0 645.0 L560.0 655.0 L554.0 683.0 L507.0 683.0 Z" fill="#f0f2f2" stroke="#444" stroke-width="0.7" /><path d="M507.0 595.4 L598.8 594.0 L598.8 603.0 L507.0 604.4 Z" fill="#e0201e" stroke="none" stroke-width="0.8" /><path d="M530 596 V604 M555 595.5 V603.5 M580 595 V603" stroke="#7a1010" stroke-width="1.2"/><path d="M507.0 606.0 L560.0 605.0 L598.0 606.0" fill="none" stroke="#333" stroke-width="1.5" stroke-linejoin="round" stroke-linecap="round" /><path d="M542.0 647.0 L646.0 646.0 L646.0 652.5 L542.0 653.5 Z" fill="#e0201e" stroke="none" stroke-width="0.8" /><path d="M532.6 649.4 L543.5 649.4 L543.5 661.0 L532.6 661.0 Z" fill="#9a9ca0" stroke="#333" stroke-width="0.7" /><path d="M561.5 654.5 L638.6 654.5 L638.6 663.5 L561.5 663.5 Z" fill="#cfd1d4" stroke="#333" stroke-width="0.8" /><path d="M561.5 677.6 L631.0 684.0 L631.0 693.0 L561.5 686.0 Z" fill="#c0c3c6" stroke="#444" stroke-width="0.7" /><path d="M507.0 663.5 L577.0 675.0 L633.5 662.0 L700.0 655.0" fill="none" stroke="#333" stroke-width="0.9" stroke-linejoin="round" stroke-linecap="round" /><path d="M507.0 690.0 L563.0 706.0" fill="none" stroke="#333" stroke-width="0.9" stroke-linejoin="round" stroke-linecap="round" /><path d="M590.0 640.0 L620.0 636.0 L650.0 632.0" fill="none" stroke="#333" stroke-width="0.9" stroke-linejoin="round" stroke-linecap="round" /><path d="M650.0 600.0 L700.0 580.0 L772.0 566.0 L832.0 562.0 L828.0 600.0 L800.0 615.0 L740.0 626.0 L680.0 626.0 L648.0 615.0 Z" fill="#d3d7db" stroke="#444" stroke-width="0.8" /><ellipse cx="685" cy="606" rx="17" ry="6" fill="#cdbfae" stroke="#333" stroke-width="0.7"/><path d="M700.0 620.0 C702.0 618.7 711.2 614.8 712.0 612.0 C712.8 609.2 702.8 605.3 705.0 603.0 C707.2 600.7 718.3 599.8 725.0 598.0 C731.7 596.2 739.2 595.0 745.0 592.0 C750.8 589.0 752.5 583.3 760.0 580.0 C767.5 576.7 778.3 574.5 790.0 572.0 C801.7 569.5 823.3 566.2 830.0 565.0" fill="none" stroke="#3c3c3c" stroke-width="5.1" stroke-linecap="round" stroke-linejoin="round"/><path d="M700.0 620.0 C702.0 618.7 711.2 614.8 712.0 612.0 C712.8 609.2 702.8 605.3 705.0 603.0 C707.2 600.7 718.3 599.8 725.0 598.0 C731.7 596.2 739.2 595.0 745.0 592.0 C750.8 589.0 752.5 583.3 760.0 580.0 C767.5 576.7 778.3 574.5 790.0 572.0 C801.7 569.5 823.3 566.2 830.0 565.0" fill="none" stroke="#f3f5f5" stroke-width="3.5" stroke-linecap="round" stroke-linejoin="round"/><path d="M740.0 575.0 L760.0 600.0 L770.0 620.0" fill="none" stroke="#333" stroke-width="0.8" stroke-linejoin="round" stroke-linecap="round" /><path d="M790.0 570.0 L780.0 600.0 L770.0 615.0" fill="none" stroke="#333" stroke-width="0.8" stroke-linejoin="round" stroke-linecap="round" /><path d="M760 565 L800 580 L820 570" fill="#e8ebee" stroke="#333" stroke-width="0.7"/><path d="M820.0 563.0 L938.6 537.3 L941.5 622.3 L845.7 630.2 L840.0 600.0 Z" fill="#9c9ea3" stroke="#333" stroke-width="0.8" /><path d="M760.0 575.0 L820.0 563.0 L938.6 537.3 L942.0 533.0 L820.0 556.0 Z" fill="#b9bcc1" stroke="#333" stroke-width="0.7" /><path d="M905.0 555.0 L918.0 550.0 L918.0 585.0 L905.0 588.0 Z" fill="#b0b3b8" stroke="#333" stroke-width="0.7" /><path d="M1362.0 228.0 C1363.7 225.3 1365.7 215.5 1372.0 212.0 C1378.3 208.5 1388.7 207.8 1400.0 207.0 C1411.3 206.2 1425.7 206.3 1440.0 207.0 C1454.3 207.7 1478.3 210.3 1486.0 211.0" fill="none" stroke="#555" stroke-width="36" stroke-linecap="round" stroke-linejoin="round" /><path d="M1362.0 228.0 C1363.7 225.3 1365.7 215.5 1372.0 212.0 C1378.3 208.5 1388.7 207.8 1400.0 207.0 C1411.3 206.2 1425.7 206.3 1440.0 207.0 C1454.3 207.7 1478.3 210.3 1486.0 211.0" fill="none" stroke="#eceeef" stroke-width="34" stroke-linecap="round" stroke-linejoin="round" /><path d="M1364.0 226.0 C1368.2 228.8 1379.5 237.2 1389.0 243.0 C1398.5 248.8 1414.5 255.3 1421.0 261.0 C1427.5 266.7 1430.5 270.7 1428.0 277.0 C1425.5 283.3 1414.0 291.8 1406.0 299.0 C1398.0 306.2 1385.8 314.2 1380.0 320.0 C1374.2 325.8 1369.3 329.0 1371.0 334.0 C1372.7 339.0 1378.2 345.2 1390.0 350.0 C1401.8 354.8 1430.5 358.5 1442.0 363.0 C1453.5 367.5 1458.8 371.7 1459.0 377.0 C1459.2 382.3 1454.5 388.8 1443.0 395.0 C1431.5 401.2 1402.8 408.2 1390.0 414.0 C1377.2 419.8 1367.8 425.2 1366.0 430.0 C1364.2 434.8 1366.2 438.2 1379.0 443.0 C1391.8 447.8 1425.5 454.5 1443.0 459.0 C1460.5 463.5 1477.2 468.2 1484.0 470.0" fill="none" stroke="#555" stroke-width="36" stroke-linecap="round" stroke-linejoin="round" /><path d="M1364.0 226.0 C1368.2 228.8 1379.5 237.2 1389.0 243.0 C1398.5 248.8 1414.5 255.3 1421.0 261.0 C1427.5 266.7 1430.5 270.7 1428.0 277.0 C1425.5 283.3 1414.0 291.8 1406.0 299.0 C1398.0 306.2 1385.8 314.2 1380.0 320.0 C1374.2 325.8 1369.3 329.0 1371.0 334.0 C1372.7 339.0 1378.2 345.2 1390.0 350.0 C1401.8 354.8 1430.5 358.5 1442.0 363.0 C1453.5 367.5 1458.8 371.7 1459.0 377.0 C1459.2 382.3 1454.5 388.8 1443.0 395.0 C1431.5 401.2 1402.8 408.2 1390.0 414.0 C1377.2 419.8 1367.8 425.2 1366.0 430.0 C1364.2 434.8 1366.2 438.2 1379.0 443.0 C1391.8 447.8 1425.5 454.5 1443.0 459.0 C1460.5 463.5 1477.2 468.2 1484.0 470.0" fill="none" stroke="#eceeef" stroke-width="34" stroke-linecap="round" stroke-linejoin="round" /><path d="M905.0 647.0 C910.8 646.8 927.5 647.5 940.0 646.0 C952.5 644.5 970.5 642.2 980.0 638.0 C989.5 633.8 994.7 627.0 997.0 621.0 C999.3 615.0 997.7 608.5 994.0 602.0 C990.3 595.5 981.5 588.0 975.0 582.0 C968.5 576.0 959.0 571.5 955.0 566.0 C951.0 560.5 949.8 553.7 951.0 549.0 C952.2 544.3 955.5 540.7 962.0 538.0 C968.5 535.3 978.7 534.5 990.0 533.0 C1001.3 531.5 1015.0 530.7 1030.0 529.0 C1045.0 527.3 1071.7 524.0 1080.0 523.0" fill="none" stroke="#666" stroke-width="28" stroke-linecap="round" stroke-linejoin="round" /><path d="M905.0 647.0 C910.8 646.8 927.5 647.5 940.0 646.0 C952.5 644.5 970.5 642.2 980.0 638.0 C989.5 633.8 994.7 627.0 997.0 621.0 C999.3 615.0 997.7 608.5 994.0 602.0 C990.3 595.5 981.5 588.0 975.0 582.0 C968.5 576.0 959.0 571.5 955.0 566.0 C951.0 560.5 949.8 553.7 951.0 549.0 C952.2 544.3 955.5 540.7 962.0 538.0 C968.5 535.3 978.7 534.5 990.0 533.0 C1001.3 531.5 1015.0 530.7 1030.0 529.0 C1045.0 527.3 1071.7 524.0 1080.0 523.0" fill="none" stroke="#eceeef" stroke-width="26" stroke-linecap="round" stroke-linejoin="round" /><path d="M941.5 560.0 L958.0 575.0 L976.0 598.0 L982.0 618.0 L966.0 631.0 L920.0 636.0 L870.0 634.0 L850.0 630.0 L941.5 622.0 Z" fill="#eceeef" stroke="none" stroke-width="0.8" /><path d="M918.0 563.0 L940.0 560.0 L968.0 595.0 L985.0 612.0" fill="none" stroke="#e0201e" stroke-width="4" stroke-linejoin="round" stroke-linecap="round" /><path d="M636.0 622.0 L660.0 636.0 L700.0 641.0 L754.0 641.0 L807.0 634.0 L832.0 622.0 L845.0 650.0 L807.0 648.0 L754.0 650.0 L700.0 650.0 L650.0 646.0 L640.0 636.0 Z" fill="#262626" stroke="#111" stroke-width="0.8" /><path d="M634.0 617.0 C636.7 619.0 640.7 626.5 650.0 629.0 C659.3 631.5 672.7 631.5 690.0 632.0 C707.3 632.5 735.7 633.7 754.0 632.0 C772.3 630.3 788.0 626.8 800.0 622.0 C812.0 617.2 820.0 610.3 826.0 603.0 C832.0 595.7 834.3 582.2 836.0 578.0" fill="none" stroke="#0b0b0b" stroke-width="13" stroke-linecap="round" stroke-linejoin="round" /><path d="M634.0 614.0 C636.7 611.7 641.5 605.0 650.0 600.0 C658.5 595.0 672.2 589.0 685.0 584.0 C697.8 579.0 712.5 573.8 727.0 570.0 C741.5 566.2 755.7 563.0 772.0 561.0 C788.3 559.0 812.0 558.5 825.0 558.0 C838.0 557.5 845.8 558.0 850.0 558.0" fill="none" stroke="#0b0b0b" stroke-width="7" stroke-linecap="round" stroke-linejoin="round" /><path d="M840.0 570.0 C839.8 575.0 838.5 590.7 839.0 600.0 C839.5 609.3 839.2 619.0 843.0 626.0 C846.8 633.0 851.7 638.5 862.0 642.0 C872.3 645.5 892.0 646.3 905.0 647.0 C918.0 647.7 927.5 647.5 940.0 646.0 C952.5 644.5 970.5 642.2 980.0 638.0 C989.5 633.8 994.7 627.0 997.0 621.0 C999.3 615.0 997.7 608.5 994.0 602.0 C990.3 595.5 981.5 588.0 975.0 582.0 C968.5 576.0 959.0 571.5 955.0 566.0 C951.0 560.5 949.8 553.7 951.0 549.0 C952.2 544.3 955.5 540.7 962.0 538.0 C968.5 535.3 978.7 534.5 990.0 533.0 C1001.3 531.5 1015.0 530.7 1030.0 529.0 C1045.0 527.3 1071.7 524.0 1080.0 523.0" fill="none" stroke="#0b0b0b" stroke-width="15" stroke-linecap="round" stroke-linejoin="round" /><path d="M832 572 L850 570 L852 640 L834 632 Z" fill="#0b0b0b"/><path d="M1080.0 523.0 C1091.7 521.3 1125.0 516.5 1150.0 513.0 C1175.0 509.5 1201.2 504.4 1230.0 502.0 C1258.8 499.6 1293.2 499.3 1323.0 498.5 C1352.8 497.7 1386.2 499.1 1409.0 497.0 C1431.8 494.9 1448.5 490.8 1460.0 486.0 C1471.5 481.2 1478.8 474.0 1478.0 468.0 C1477.2 462.0 1466.3 454.5 1455.0 450.0 C1443.7 445.5 1417.5 442.5 1410.0 441.0" fill="none" stroke="#0b0b0b" stroke-width="10" stroke-linecap="round" stroke-linejoin="round" /><path d="M985.0 557.0 C995.8 555.5 1027.0 551.2 1050.0 548.0 C1073.0 544.8 1099.7 541.0 1123.0 538.0 C1146.3 535.0 1168.5 532.3 1190.0 530.0 C1211.5 527.7 1233.7 525.3 1252.0 524.0 C1270.3 522.7 1292.0 522.3 1300.0 522.0" fill="none" stroke="#0b0b0b" stroke-width="13" stroke-linecap="round" stroke-linejoin="round" /><path d="M1252.6 503.0 L1449.0 500.0 L1449.0 530.0 L1410.0 535.0 L1252.6 542.6 Z" fill="#1c1c1c" stroke="#111" stroke-width="1" /><rect x="1375.6" y="516.8" width="33.4" height="12.6" fill="#e6e2d6"/><rect x="1411" y="511" width="38" height="11.5" fill="#e2e4e4"/><path d="M1262 512 H1370 M1262 520 H1370 M1262 533 H1370 M1275 507 V540 M1330 507 V540" stroke="#bdbdbd" stroke-width="1" fill="none"/><rect x="1255" y="540" width="120" height="5" fill="#d8dcdc" stroke="#222" stroke-width="0.8"/><path d="M1362.0 228.0 C1363.7 225.3 1365.7 215.5 1372.0 212.0 C1378.3 208.5 1388.7 207.8 1400.0 207.0 C1411.3 206.2 1425.7 206.3 1440.0 207.0 C1454.3 207.7 1478.3 210.3 1486.0 211.0" fill="none" stroke="#0b0b0b" stroke-width="13" stroke-linecap="round" stroke-linejoin="round" /><path d="M1364.0 226.0 C1368.2 228.8 1379.5 237.2 1389.0 243.0 C1398.5 248.8 1414.5 255.3 1421.0 261.0 C1427.5 266.7 1426.8 274.3 1428.0 277.0" fill="none" stroke="#0b0b0b" stroke-width="15" stroke-linecap="round" stroke-linejoin="round" /><path d="M1428.0 277.0 C1424.3 280.7 1414.0 291.8 1406.0 299.0 C1398.0 306.2 1385.8 314.2 1380.0 320.0 C1374.2 325.8 1372.5 331.7 1371.0 334.0" fill="none" stroke="#474747" stroke-width="15" stroke-linecap="round" stroke-linejoin="round" /><path d="M1371.0 334.0 C1374.2 336.7 1378.2 345.2 1390.0 350.0 C1401.8 354.8 1430.5 358.5 1442.0 363.0 C1453.5 367.5 1458.8 371.7 1459.0 377.0 C1459.2 382.3 1454.5 388.8 1443.0 395.0 C1431.5 401.2 1402.8 408.2 1390.0 414.0 C1377.2 419.8 1367.8 425.2 1366.0 430.0 C1364.2 434.8 1366.2 438.2 1379.0 443.0 C1391.8 447.8 1425.5 454.5 1443.0 459.0 C1460.5 463.5 1477.2 468.2 1484.0 470.0" fill="none" stroke="#0b0b0b" stroke-width="15" stroke-linecap="round" stroke-linejoin="round" /><rect x="1336" y="275" width="90" height="66" fill="none" stroke="#b5b9bc" stroke-width="1.2" stroke-dasharray="5 3"/><text x="1340" y="318" font-family="Liberation Sans" font-weight="700" font-size="16" fill="#a9adb1" transform="rotate(4 1380 318)">DESTRA PERO</text><path d="M1353.4 350.0 L1372.0 338.8 L1378.8 360.0 Z" fill="#b8c23c" stroke="none" stroke-width="0.8" /><path d="M1372.0 338.8 L1395.0 370.0 L1412.0 397.5" fill="none" stroke="#e0201e" stroke-width="2.5" stroke-linejoin="round" stroke-linecap="round" /><g stroke="#bfc3c5" stroke-width="2" fill="none"><path d="M1253 239 L1264 229 L1275 239 M1256 237 V248.5 H1272 V237"/><rect x="1290.5" y="234.5" width="19" height="14" rx="2.5"/><circle cx="1300" cy="241.5" r="3.8"/></g><rect x="1157.5" y="363.4" width="83" height="26" rx="13" fill="#ffffff" fill-opacity="0.12" stroke="#9a9a9a" stroke-opacity="0.5" stroke-width="1"/><text x="1199" y="382.7" text-anchor="middle" font-family="Liberation Sans" font-size="17.5" fill="#fafafa" stroke="#1a1a1a" stroke-width="2.6" paint-order="stroke" textLength="65" lengthAdjust="spacingAndGlyphs">Piazzale</text><rect x="1263.15" y="448.3" width="80.7" height="26" rx="13" fill="#ffffff" fill-opacity="0.12" stroke="#9a9a9a" stroke-opacity="0.5" stroke-width="1"/><text x="1303.5" y="467.6" text-anchor="middle" font-family="Liberation Sans" font-size="17.5" fill="#fafafa" stroke="#1a1a1a" stroke-width="2.6" paint-order="stroke" textLength="62.7" lengthAdjust="spacingAndGlyphs">LF_ED.D</text><rect x="1175.0" y="492.4" width="62" height="26" rx="13" fill="#ffffff" fill-opacity="0.12" stroke="#9a9a9a" stroke-opacity="0.5" stroke-width="1"/><text x="1206" y="511.7" text-anchor="middle" font-family="Liberation Sans" font-size="17.5" fill="#fafafa" stroke="#1a1a1a" stroke-width="2.6" paint-order="stroke" textLength="44" lengthAdjust="spacingAndGlyphs">LF_RF</text><rect x="1259.1" y="505.70000000000005" width="107.4" height="26" rx="13" fill="#ffffff" fill-opacity="0.12" stroke="#9a9a9a" stroke-opacity="0.5" stroke-width="1"/><text x="1312.8" y="525.0" text-anchor="middle" font-family="Liberation Sans" font-size="17.5" fill="#fafafa" stroke="#1a1a1a" stroke-width="2.6" paint-order="stroke" textLength="89.4" lengthAdjust="spacingAndGlyphs">Ed.D-LF_L0</text><rect x="683.4499999999999" y="455" width="64.7" height="26" rx="13" fill="#ffffff" fill-opacity="0.12" stroke="#9a9a9a" stroke-opacity="0.5" stroke-width="1"/><text x="715.8" y="474.3" text-anchor="middle" font-family="Liberation Sans" font-size="17.5" fill="#fafafa" stroke="#1a1a1a" stroke-width="2.6" paint-order="stroke" textLength="46.7" lengthAdjust="spacingAndGlyphs">LF_R1</text><rect x="886.25" y="464.4" width="75.3" height="26" rx="13" fill="#ffffff" fill-opacity="0.12" stroke="#9a9a9a" stroke-opacity="0.5" stroke-width="1"/><text x="923.9" y="483.7" text-anchor="middle" font-family="Liberation Sans" font-size="17.5" fill="#fafafa" stroke="#1a1a1a" stroke-width="2.6" paint-order="stroke" textLength="57.3" lengthAdjust="spacingAndGlyphs">LF_SP2</text><rect x="626.75" y="506.20000000000005" width="63.3" height="26" rx="13" fill="#ffffff" fill-opacity="0.12" stroke="#9a9a9a" stroke-opacity="0.5" stroke-width="1"/><text x="658.4" y="525.5" text-anchor="middle" font-family="Liberation Sans" font-size="17.5" fill="#fafafa" stroke="#1a1a1a" stroke-width="2.6" paint-order="stroke" textLength="45.3" lengthAdjust="spacingAndGlyphs">LF_B1</text><rect x="628.05" y="580.4" width="60.7" height="26" rx="13" fill="#ffffff" fill-opacity="0.12" stroke="#9a9a9a" stroke-opacity="0.5" stroke-width="1"/><text x="658.4" y="599.6999999999999" text-anchor="middle" font-family="Liberation Sans" font-size="17.5" fill="#fafafa" stroke="#1a1a1a" stroke-width="2.6" paint-order="stroke" textLength="42.7" lengthAdjust="spacingAndGlyphs">LF_L1</text><rect x="470" y="363" width="101" height="30" rx="14" fill="#ffffff" fill-opacity="0.12" stroke="#9a9a9a" stroke-opacity="0.6" stroke-width="1"/><text x="478" y="384.5" font-family="Liberation Sans" font-size="18" fill="#fafafa" stroke="#1a1a1a" stroke-width="2.6" paint-order="stroke" textLength="86" lengthAdjust="spacingAndGlyphs">Undefined</text><rect x="506" y="202" width="978" height="12" fill="url(#shadowT)"/></svg>
<div class="a" style="left:506px;top:66px;width:978px;height:136px;background:#2d2d2d;"></div>
<div class="a" style="left:506px;top:707px;width:978px;height:249px;background:#2f2f2f;"></div>
<div class="a" style="left:1484px;top:66px;width:426px;height:890px;background:#313131;"></div>
<div class="a" style="left:82px;top:956px;width:1828px;height:50px;background:#2a2a2a;"></div>
<svg class="a" style="left:0;top:0" width="1913" height="1012" fill="none"><svg x="83" y="66" width="423" height="890" viewBox="83 66 423 890" style="overflow:hidden"><path d="M200.0 720.0 L233.0 582.0 L300.0 520.0 L366.0 483.0 L438.0 433.0 L510.0 400.0" fill="none" stroke="#1c1c1c" stroke-width="1" stroke-opacity="0.2" fill-opacity="0.2"/><path d="M110.0 593.0 L200.0 594.0 L300.0 610.0 L420.0 630.0 L506.0 640.0" fill="none" stroke="#1c1c1c" stroke-width="1" stroke-opacity="0.2" fill-opacity="0.2"/><path d="M260.0 700.0 L350.0 690.0 L420.0 688.0 L506.0 686.0" fill="none" stroke="#1c1c1c" stroke-width="1" stroke-opacity="0.2" fill-opacity="0.2"/><path d="M180.0 760.0 L300.0 770.0 L420.0 775.0 L506.0 772.0" fill="none" stroke="#1c1c1c" stroke-width="1" stroke-opacity="0.2" fill-opacity="0.2"/><rect x="438" y="428" width="47" height="22" fill="none" stroke="#1e1e1e" stroke-opacity="0.2" stroke-width="1"/><rect x="374" y="466" width="69" height="22" fill="none" stroke="#1e1e1e" stroke-opacity="0.2" stroke-width="1"/><rect x="457" y="461" width="33" height="33" fill="none" stroke="#1e1e1e" stroke-opacity="0.2" stroke-width="1"/><rect x="385" y="505" width="39" height="22" fill="none" stroke="#1e1e1e" stroke-opacity="0.2" stroke-width="1"/><rect x="250" y="776" width="40" height="24" fill="none" stroke="#1e1e1e" stroke-opacity="0.2" stroke-width="1"/><rect x="300" y="782" width="45" height="28" fill="none" stroke="#1e1e1e" stroke-opacity="0.2" stroke-width="1"/><rect x="360" y="778" width="40" height="27" fill="none" stroke="#1e1e1e" stroke-opacity="0.2" stroke-width="1"/><rect x="415" y="790" width="45" height="25" fill="none" stroke="#1e1e1e" stroke-opacity="0.2" stroke-width="1"/><rect x="200" y="710" width="116" height="50" fill="none" stroke="#1e1e1e" stroke-opacity="0.2" stroke-width="1"/><rect x="470" y="790" width="36" height="25" fill="none" stroke="#1e1e1e" stroke-opacity="0.2" stroke-width="1"/><ellipse cx="470" cy="615" rx="55" ry="16" fill="none" stroke="#5a1f1f" stroke-opacity="0.45" stroke-width="3"/><text x="327" y="537" font-family="Liberation Sans" font-size="17" fill="#2a2a2a" fill-opacity="0.6" stroke="#2a2a2a" stroke-opacity="0.4" stroke-width="1">LF_SP4</text><text x="327" y="592" font-family="Liberation Sans" font-size="17" fill="#2a2a2a" fill-opacity="0.6" stroke="#2a2a2a" stroke-opacity="0.4" stroke-width="1">LF_ED.E</text><text x="478" y="384.5" font-family="Liberation Sans" font-size="18" fill="#2a2a2a" fill-opacity="0.7" stroke="#2a2a2a" stroke-opacity="0.5" stroke-width="1">Und</text></svg><svg x="1485" y="66" width="425" height="890" viewBox="1485 66 425 890" style="overflow:hidden"><rect x="1744" y="157" width="160" height="34" fill="#1a1a1a" fill-opacity="0.35"/><path d="M1765.0 100.0 L1765.0 157.0" fill="none" stroke="#1a1a1a" stroke-width="1.5" stroke-opacity="0.35" fill-opacity="0.35"/><path d="M1785.0 100.0 L1785.0 157.0" fill="none" stroke="#1a1a1a" stroke-width="1.5" stroke-opacity="0.35" fill-opacity="0.35"/><path d="M1800.0 100.0 L1800.0 157.0" fill="none" stroke="#1a1a1a" stroke-width="1.5" stroke-opacity="0.35" fill-opacity="0.35"/><path d="M1815.0 100.0 L1815.0 157.0" fill="none" stroke="#1a1a1a" stroke-width="1.5" stroke-opacity="0.35" fill-opacity="0.35"/><path d="M1830.0 100.0 L1830.0 157.0" fill="none" stroke="#1a1a1a" stroke-width="1.5" stroke-opacity="0.35" fill-opacity="0.35"/><path d="M1848.0 100.0 L1848.0 157.0" fill="none" stroke="#1a1a1a" stroke-width="1.5" stroke-opacity="0.35" fill-opacity="0.35"/><path d="M1862.0 100.0 L1862.0 157.0" fill="none" stroke="#1a1a1a" stroke-width="1.5" stroke-opacity="0.35" fill-opacity="0.35"/><path d="M1760.0 100.0 L1870.0 100.0" fill="none" stroke="#1a1a1a" stroke-width="1.2" stroke-opacity="0.35" fill-opacity="0.35"/><path d="M1490.0 175.0 L1560.0 140.0 L1650.0 118.0 L1760.0 100.0 L1910.0 90.0" fill="none" stroke="#1c1c1c" stroke-width="1" stroke-opacity="0.2" fill-opacity="0.2"/><path d="M1490.0 250.0 L1600.0 230.0 L1700.0 215.0 L1800.0 205.0 L1910.0 215.0" fill="none" stroke="#1c1c1c" stroke-width="1" stroke-opacity="0.2" fill-opacity="0.2"/><path d="M1490.0 260.0 L1560.0 255.0 L1640.0 258.0 L1700.0 270.0 L1780.0 290.0 L1850.0 300.0 L1910.0 310.0" fill="none" stroke="#1c1c1c" stroke-width="1" stroke-opacity="0.2" fill-opacity="0.2"/><path d="M1550.0 330.0 L1600.0 300.0 L1700.0 280.0 L1800.0 270.0 L1910.0 280.0" fill="none" stroke="#1c1c1c" stroke-width="1" stroke-opacity="0.2" fill-opacity="0.2"/><path d="M1490.0 420.0 L1580.0 400.0 L1700.0 370.0 L1800.0 340.0 L1910.0 320.0" fill="none" stroke="#1c1c1c" stroke-width="1" stroke-opacity="0.2" fill-opacity="0.2"/><path d="M1560.0 500.0 L1620.0 480.0 L1700.0 470.0" fill="none" stroke="#1c1c1c" stroke-width="1" stroke-opacity="0.2" fill-opacity="0.2"/><path d="M1500.0 650.0 L1600.0 560.0 L1700.0 440.0 L1760.0 380.0" fill="none" stroke="#1c1c1c" stroke-width="1" stroke-opacity="0.2" fill-opacity="0.2"/><text x="1572" y="183" font-family="Liberation Sans" font-size="20" fill="#1f1f1f" fill-opacity="0.35">132 slm - Ed.A</text></svg><svg x="507" y="707" width="977" height="249" viewBox="507 707 977 249" style="overflow:hidden"><path d="M506.0 760.0 L600.0 770.0 L700.0 790.0 L800.0 800.0 L900.0 808.0 L1000.0 812.0" fill="none" stroke="#1c1c1c" stroke-width="1" stroke-opacity="0.2" fill-opacity="0.2"/><path d="M700.0 720.0 L800.0 730.0 L900.0 745.0 L1000.0 750.0 L1100.0 760.0 L1200.0 770.0" fill="none" stroke="#1c1c1c" stroke-width="1" stroke-opacity="0.2" fill-opacity="0.2"/><rect x="560" y="770" width="60" height="30" fill="none" stroke="#1e1e1e" stroke-opacity="0.25" stroke-width="1"/><rect x="640" y="780" width="60" height="35" fill="none" stroke="#1e1e1e" stroke-opacity="0.25" stroke-width="1"/><rect x="720" y="790" width="50" height="30" fill="none" stroke="#1e1e1e" stroke-opacity="0.25" stroke-width="1"/><rect x="1100" y="780" width="60" height="25" fill="none" stroke="#1e1e1e" stroke-opacity="0.25" stroke-width="1"/><rect x="1180" y="790" width="60" height="25" fill="none" stroke="#1e1e1e" stroke-opacity="0.25" stroke-width="1"/></svg></svg>
<div class="a" style="left:506px;top:66px;width:1.2px;height:136px;background:#474747;"></div>
<div class="a" style="left:1484px;top:66px;width:1.2px;height:890px;background:#474747;"></div>
<div class="a" style="left:506px;top:707px;width:1.2px;height:249px;background:#474747;"></div>
<svg class="a" style="left:20px;top:12px;" width="50" height="45" viewBox="0 0 50 45" fill="none" stroke-linecap="round" stroke-linejoin="round">
<rect x="9" y="11" width="36.8" height="29.8" rx="1" fill="#6f0f2b"/>
<path d="M4.9 9 L11.4 4.6 V34.5 L4.9 38.4 Z" fill="#e06089"/>
<rect x="11.4" y="4" width="31.5" height="30.9" rx="1.5" fill="#d81f56"/>
<path d="M20.9 10.5 H34.3 V14.6 H29.9 V27.7 H25.3 V14.6 H20.9 Z" fill="#fff"/>
</svg>
<svg class="a" style="left:82px;top:0px;" width="80" height="66" viewBox="0 0 80 66" fill="none" stroke-linecap="round" stroke-linejoin="round">
<g stroke="#e0e0e0" stroke-width="1.8">
<path d="M12.0 33.3 A12.7 6.5 0 1 1 15.1 37.6"/>
<path d="M20.5 34.2 L15.1 37.6 L18.5 42.7"/>
<path d="M22.2 26.7 H27.2" stroke="#344b60" stroke-width="2.5"/>
<path d="M24.5 23.1 V46.7"/>
</g>
<path d="M46 31.8 L51.5 38.0 L57 31.8" stroke="#e0e0e0" stroke-width="1.6"/>
</svg>
<svg class="a" style="left:150px;top:0px;" width="140" height="66" viewBox="0 0 140 66" fill="none" stroke-linecap="round" stroke-linejoin="round">
<g stroke="#e0e0e0" stroke-width="1.8">
<rect x="-14" y="-4.5" width="28" height="9" rx="1.2" transform="translate(25.6 34.7) rotate(-45)"/>
<path d="M18.5 35 l3 3 M21.8 31.8 l2 2 M25 28.5 l3 3 M28.3 25.3 l2 2"/>
</g>
<path d="M46.8 31.8 L52.3 38.0 L57.8 31.8" stroke="#e0e0e0" stroke-width="1.6"/>
<g stroke="#e0e0e0" stroke-width="1.9">
<path d="M96.4 48 V43 L89.8 38 V27.5"/>
<path d="M96.4 43 V37.5 L99.7 34 V22.5"/>
<path d="M86.2 31 L89.8 27 L93.4 31"/>
<path d="M96.1 26.5 L99.7 22 L103.3 26.5"/>
</g>
<path d="M115.7 31.8 L121.2 38.0 L126.7 31.8" stroke="#e0e0e0" stroke-width="1.6"/>
<path d="M163.5 21 V41" stroke="#ddd" stroke-width="1.6"/>
</svg>
<div class="a" style="left:647px;top:13px;width:616px;height:43px;background:#000;border-radius:5px"></div>
<svg class="a" style="left:660px;top:20px;" width="30" height="30" viewBox="0 0 30 30" fill="none" stroke-linecap="round" stroke-linejoin="round"><g stroke="#e8e8e8" stroke-width="1.9"><circle cx="12.9" cy="12.2" r="7.6"/><path d="M18.3 17.8 L25 25"/></g></svg>
<svg class="a" style="left:1540px;top:10px;" width="370" height="50" viewBox="0 0 370 50" fill="none" stroke-linecap="round" stroke-linejoin="round">
<g stroke="#e0e0e0" stroke-width="2">
<path d="M9.5 36.5 V16 Q9.5 13.3 12.2 13.3 H24.8 Q27.5 13.3 27.5 16 V36.5 L18.5 30 Z"/>
<path d="M70.2 13.8 V26.6 H83.3 A11.2 11.6 0 1 1 70.2 13.8 Z"/>
</g>
<path d="M74.2 13.4 V22.6 H83.6 A9.6 9.4 0 0 0 74.2 13.4 Z" fill="#e0e0e0"/>
<path d="M106.4 8 V40.7" stroke="#ddd" stroke-width="1.6"/>
<g stroke="#6a6a6a" stroke-width="2">
<path d="M133 35 H148.5 L146.5 32 V24 Q146.5 16 140.8 15.5 Q135 16 135 24 V32 Z"/>
<path d="M138.5 37.5 Q140.8 40 143 37.5"/>
<circle cx="140.8" cy="13.5" r="0.8"/>
</g>
<g stroke="#e0e0e0" stroke-width="2">
<circle cx="194.1" cy="25" r="11.2"/>
<circle cx="248" cy="25" r="11.2"/>
<path d="M244.3 21.5 Q244.3 17.5 248 17.5 Q251.7 17.5 251.7 21 Q251.7 23.5 248 25.5 V27.5"/>
</g>
<path d="M188.5 31 L192 23 L199.8 19 L196.2 27 Z" fill="#e0e0e0"/>
<circle cx="194.1" cy="25" r="1.5" fill="#2a2a2a"/>
<circle cx="248" cy="31.5" r="1.3" fill="#e0e0e0"/>
</svg>
<svg class="a" style="left:1825px;top:15px;" width="75" height="40" viewBox="0 0 75 40" fill="none" stroke-linecap="round" stroke-linejoin="round">
<circle cx="53.3" cy="19.9" r="19.7" fill="#91acdc"/>
<circle cx="19.9" cy="19.9" r="19.9" fill="#f2f2f2"/>
<clipPath id="avc"><circle cx="19.9" cy="19.9" r="19.9"/></clipPath>
<g clip-path="url(#avc)">
<rect x="0" y="0" width="40" height="40" fill="#f6f6f6"/>
<path d="M10 13 Q11 5 20 5.5 Q29 6 30 13 L28.5 17 Q26 11.5 20 11.5 Q14 11.5 11.5 17 Z" fill="#2e2e2e"/>
<path d="M12 16 Q11.5 29 20 31 Q27.5 29 28 16 Q25.5 12.5 20 12.5 Q14 12.5 12 16 Z" fill="#c4c4c4"/>
<path d="M14.5 18.5 H18 M22 18.5 H25.5" stroke="#444" stroke-width="1.5"/>
<path d="M14 25 Q15.5 30.5 20 31 Q24.5 30.5 26 25 Q23.5 27.5 20 27.5 Q16.5 27.5 14 25 Z" fill="#8a8a8a"/>
<path d="M4 40 Q7 33 20 33 Q33 33 36 40 Z" fill="#e0e0e0"/>
</g>
</svg>
<div class="a" style="left:0px;top:390px;width:82px;height:80px;background:#2b2b2b;border-top:1px solid #4a4a4a;border-bottom:1px solid #4a4a4a"></div>
<div class="a" style="left:0px;top:926px;width:82px;height:80px;background:#2b2b2b;border-top:1.5px solid #555"></div>
<div class="a" style="left:6px;top:1005px;width:77px;height:1.5px;background:#5e5e5e;"></div>
<div class="a" style="left:81.8px;top:926px;width:1.5px;height:80px;background:#555;"></div>
<svg class="a" style="left:0px;top:66px;" width="82" height="940" viewBox="0 0 82 940" fill="none" stroke-linecap="round" stroke-linejoin="round">
<g stroke="#e0e0e0" stroke-width="2">
<path d="M30 19.5 H52 L44 32.5 V40.5 Q44 41.5 43 41.5 H39.5 Q38.5 41.5 38.5 40.5 V32.5 Z"/>
<path d="M29.5 100.5 V109.5 L42.5 122.5 L52.5 112.5 L39.5 99.5 H30.5 Z"/>
<rect x="29.7" y="180.6" width="22.8" height="20.8" rx="3.2"/>
<path d="M30 268.6 V265.3 Q30 261.7 33.5 261.7 H39.6 L42.4 265 H49.2 Q52 265 52 268 V278.5 Q52 281.4 49.2 281.4 H45.6"/>
</g>
<path d="M40 180 H49.5 Q52.8 180 52.8 183.3 V185 H42.2 Z" fill="#e2e2e2"/>
<circle cx="34.5" cy="104.5" r="1.6" fill="#e2e2e2"/>
<path d="M28.5 282.8 V272.6 H32.5 L35.7 269.7 L38.9 272.6 V276.8 H42.8 V282.8 Z" fill="#e2e2e2"/>
<g fill="#3c3c3c"><rect x="30.9" y="275.1" width="1.7" height="1.7"/><rect x="35" y="275.1" width="1.7" height="1.7"/><rect x="30.9" y="279.5" width="1.7" height="1.7"/><rect x="35" y="279.5" width="1.7" height="1.7"/><rect x="39.1" y="279.5" width="1.7" height="1.7"/></g>
<g stroke="#4fa3e0" stroke-width="2" fill="#4fa3e0">
<path d="M40.8 342.8 V354.6 M31.1 363.2 V354.6 H50.8 V363.2 M40.8 354.6 V363.2" fill="none"/>
<circle cx="40.8" cy="342.8" r="2.4" stroke="none"/><circle cx="31.1" cy="363.2" r="2.4" stroke="none"/><circle cx="40.8" cy="363.2" r="2.4" stroke="none"/><circle cx="50.8" cy="363.2" r="2.4" stroke="none"/>
</g>
<g stroke="#e0e0e0" stroke-width="2" fill="#e2e2e2">
<circle cx="40.8" cy="435" r="5.5" fill="none"/>
<path d="M40.8 422.4 V429.5 M36 437.8 L31 442.5 M45.6 437.8 L50.6 442.5" fill="none"/>
<circle cx="40.8" cy="422.4" r="2.4" stroke="none"/><circle cx="30.6" cy="442.6" r="3" stroke="none"/><circle cx="51" cy="442.6" r="3" stroke="none"/>
</g>
<g stroke="#e0e0e0" stroke-width="2">
<circle cx="35.5" cy="510" r="4.3"/><circle cx="46.5" cy="510" r="4.3"/>
<path d="M28 524 Q28.5 516.5 35.5 516.5 Q42 516.5 42.5 524"/>
<path d="M40.5 517.5 Q42 516.5 46.5 516.5 Q53.5 516.5 54 524"/>
</g>
<path d="M29 727 H34.2 L38.6 716.5 L45 737.5 L48.6 727 H53.2" stroke="#e0e0e0" stroke-width="2"/>
<g stroke="#e0e0e0" stroke-width="2">
<path d="M31.5 802 A11 11 0 1 1 35 815.5"/>
<path d="M41.5 801 V808.5 L46 812.5"/>
</g>
<path d="M27 806.5 H35 L31 811.5 Z" fill="#e2e2e2"/>
<g stroke="#4fa3e0" stroke-width="2.2">
<rect x="28.8" y="879.2" width="24.2" height="19.6" rx="3"/>
<path d="M28.8 883.4 H53 M28.8 892.2 H53 M34.2 883.4 V898.8 M44.2 883.4 V898.8"/>
</g>
</svg>
<div class="a" style="left:95px;top:128px;width:399.7px;height:47px;background:transparent;border:1.6px solid #d6d6d6;border-radius:3px"></div>
<div class="a" style="left:95px;top:298px;width:411px;height:1px;background:#5a5a5a;"></div>
<svg class="a" style="left:0px;top:0px;" width="510" height="400" viewBox="0 0 510 400" fill="none" stroke-linecap="round" stroke-linejoin="round">
<path d="M427.1 82.5 V95.5 M420.6 89 H433.6" stroke="#4fa3e0" stroke-width="1.8"/>
<g stroke="#e0e0e0" stroke-width="1.7"><circle cx="117.5" cy="149.8" r="5.4"/><path d="M121.4 153.7 L126 158.3"/></g>
<g stroke="#e0e0e0" stroke-width="1.6">
<path d="M467.2 143.6 V158 M464.3 146.6 L467.2 143.4 L470.1 146.6 M472.5 147.4 H476 M472.5 152.3 H478 M472.5 156.8 H480"/>
</g>
<g stroke="#e0e0e0" stroke-width="1.6">
<path d="M124.8 209.5 L129.3 202.7 H111 L117.8 213.5 V219.4 H119.4"/>
<path d="M127.6 219.8 A3.8 3.8 0 1 1 128 213.8"/>
</g>
<path d="M126 214.6 L129.6 213.4 L128.8 217 Z" fill="#e0e0e0"/>
<g stroke="#707070" stroke-width="1.6">
<path d="M146.6 204.6 H162 M151.8 204 Q151.8 202 154.3 202 Q156.8 202 156.8 204 M148.8 207 V216.5 Q148.8 218 150.5 218 H158 Q159.8 218 159.8 216.5 V207 M152.5 208.6 V213.6 M156 208.6 V213.6"/>
</g>
<g stroke="#e0e0e0" stroke-width="1.8" fill="none">
<path d="M473.2 252.2 V247.2 H478.2 M486.5 247.2 H491.5 V252.2 M491.5 260.0 V265.0 H486.5 M478.2 265.0 H473.2 V260.0"/></g>
<path d="M482.5 250.79999999999998 L486.8 253.2 V258.4 L482.5 260.8 L478.2 258.4 V253.2 Z" fill="#e0e0e0"/>
<path d="M483.0 256.2 L485.5 254.79999999999998 V257.8 L483.0 259.2 Z" fill="#353535"/>
<g stroke="#e0e0e0" stroke-width="1.8" fill="none">
<path d="M473.2 319 V314 H478.2 M486.5 314 H491.5 V319 M491.5 326.8 V331.8 H486.5 M478.2 331.8 H473.2 V326.8"/></g>
<path d="M482.5 317.6 L486.8 320 V325.2 L482.5 327.6 L478.2 325.2 V320 Z" fill="#e0e0e0"/>
<path d="M483.0 323 L485.5 321.6 V324.6 L483.0 326 Z" fill="#353535"/>
<g stroke="#e8a83a" stroke-width="1.7">
<path d="M447.2 314.8 L456.6 331.3 Q457 332.2 456 332.2 H438.4 Q437.4 332.2 437.8 331.3 Z"/>
<path d="M447.2 320.6 V326.2"/>
</g>
<circle cx="447.2" cy="329.2" r="1" fill="#e8a83a"/>
</svg>
<div class="a" style="left:996px;top:83.3px;width:53.8px;height:27.2px;background:transparent;border:1px solid #5e5e5e;border-radius:4px"></div>
<div class="a" style="left:1440px;top:86px;width:31.8px;height:23.8px;background:transparent;border:1px solid #5e5e5e;border-radius:3px"></div>
<div class="a" style="left:525px;top:137.4px;width:24.7px;height:24px;background:transparent;border:1.5px solid #e0e0e0;border-radius:2px"></div>
<div class="a" style="left:1447px;top:137.4px;width:24.9px;height:24px;background:transparent;border:1.5px solid #e0e0e0;border-radius:2px"></div>
<svg class="a" style="left:0;top:0" width="1500" height="210" fill="none" stroke-linecap="round" stroke-linejoin="round"><path d="M562.7 158 V170.5" stroke="#a0a0a0" stroke-width="1.8" stroke-linecap="butt"/><path d="M586.9 158 V170.5" stroke="#a0a0a0" stroke-width="1.8" stroke-linecap="butt"/><path d="M611.2 146 V170.5" stroke="#a8a8a8" stroke-width="1.8" stroke-linecap="butt"/><path d="M635.4 158 V170.5" stroke="#a0a0a0" stroke-width="1.8" stroke-linecap="butt"/><path d="M659.7 158 V170.5" stroke="#a0a0a0" stroke-width="1.8" stroke-linecap="butt"/><path d="M683.9 158 V170.5" stroke="#a0a0a0" stroke-width="1.8" stroke-linecap="butt"/><path d="M708.1 133.5 V170.5" stroke="#c8c8c8" stroke-width="2.4" stroke-linecap="butt"/><path d="M732.4 158 V170.5" stroke="#a0a0a0" stroke-width="1.8" stroke-linecap="butt"/><path d="M756.6 158 V170.5" stroke="#a0a0a0" stroke-width="1.8" stroke-linecap="butt"/><path d="M780.9 158 V170.5" stroke="#a0a0a0" stroke-width="1.8" stroke-linecap="butt"/><path d="M805.1 146 V170.5" stroke="#a8a8a8" stroke-width="1.8" stroke-linecap="butt"/><path d="M829.3 158 V170.5" stroke="#a0a0a0" stroke-width="1.8" stroke-linecap="butt"/><path d="M853.6 158 V170.5" stroke="#a0a0a0" stroke-width="1.8" stroke-linecap="butt"/><path d="M877.8 158 V170.5" stroke="#a0a0a0" stroke-width="1.8" stroke-linecap="butt"/><path d="M902.1 146 V170.5" stroke="#a8a8a8" stroke-width="1.8" stroke-linecap="butt"/><path d="M926.3 158 V170.5" stroke="#a0a0a0" stroke-width="1.8" stroke-linecap="butt"/><path d="M950.5 158 V170.5" stroke="#a0a0a0" stroke-width="1.8" stroke-linecap="butt"/><path d="M974.8 158 V170.5" stroke="#a0a0a0" stroke-width="1.8" stroke-linecap="butt"/><path d="M999.0 133.5 V170.5" stroke="#c8c8c8" stroke-width="2.4" stroke-linecap="butt"/><path d="M1023.3 158 V170.5" stroke="#a0a0a0" stroke-width="1.8" stroke-linecap="butt"/><path d="M1047.5 158 V170.5" stroke="#a0a0a0" stroke-width="1.8" stroke-linecap="butt"/><path d="M1071.7 158 V170.5" stroke="#a0a0a0" stroke-width="1.8" stroke-linecap="butt"/><path d="M1096.0 146 V170.5" stroke="#a8a8a8" stroke-width="1.8" stroke-linecap="butt"/><path d="M1120.2 158 V170.5" stroke="#a0a0a0" stroke-width="1.8" stroke-linecap="butt"/><path d="M1144.5 158 V170.5" stroke="#a0a0a0" stroke-width="1.8" stroke-linecap="butt"/><path d="M1168.7 158 V170.5" stroke="#a0a0a0" stroke-width="1.8" stroke-linecap="butt"/><path d="M1192.9 146 V170.5" stroke="#a8a8a8" stroke-width="1.8" stroke-linecap="butt"/><path d="M1217.2 158 V170.5" stroke="#a0a0a0" stroke-width="1.8" stroke-linecap="butt"/><path d="M1241.4 158 V170.5" stroke="#a0a0a0" stroke-width="1.8" stroke-linecap="butt"/><path d="M1265.7 158 V170.5" stroke="#a0a0a0" stroke-width="1.8" stroke-linecap="butt"/><path d="M1289.9 133.5 V170.5" stroke="#c8c8c8" stroke-width="2.4" stroke-linecap="butt"/><path d="M1314.1 158 V170.5" stroke="#a0a0a0" stroke-width="1.8" stroke-linecap="butt"/><path d="M1338.4 158 V170.5" stroke="#a0a0a0" stroke-width="1.8" stroke-linecap="butt"/><path d="M1362.6 158 V170.5" stroke="#a0a0a0" stroke-width="1.8" stroke-linecap="butt"/><path d="M1386.9 146 V170.5" stroke="#a8a8a8" stroke-width="1.8" stroke-linecap="butt"/><path d="M1411.1 158 V170.5" stroke="#a0a0a0" stroke-width="1.8" stroke-linecap="butt"/></svg>
<svg class="a" style="left:0px;top:0px;" width="1500" height="210" viewBox="0 0 1500 210" fill="none" stroke-linecap="round" stroke-linejoin="round">
<g stroke="#e6e6e6" stroke-width="1.9">
<path d="M544.5 88.6 L537.8 95.4 M537.6 90.2 V96 H543.2"/>
<path d="M526.8 106.4 L533.5 99.5 M528 99.4 H533.6 V105"/>
</g>
<path d="M560.5 83.3 V110.8 M982.7 83.3 V110.8 M1273.3 83.3 V110.8 M1357.4 83.3 V111" stroke="#4e4e4e" stroke-width="1.3"/>
<g stroke="#e6e6e6" stroke-width="1.9">
<path d="M576 92 Q576 89.5 578.5 89.5 H589.8 Q592.3 89.5 592.3 92 V103.5 Q592.3 106.3 589.5 106.3 H578.8 Q576 106.3 576 103.5 Z"/>
<path d="M578.4 87.5 V90 M584.2 87.5 V90 M590 87.5 V90"/>
</g>
<rect x="576" y="89.5" width="16.3" height="5.5" fill="#e6e6e6"/>
<circle cx="1007.6" cy="97.5" r="4.4" fill="#e34b9b"/>
<path d="M1246 95 L1251.0 100.7 L1256 95" stroke="#e0e0e0" stroke-width="1.6"/>
<g stroke="#e0e0e0" stroke-width="1.6">
<circle cx="1298.2" cy="97.3" r="8.8"/><path d="M1293.3 97.3 H1303.1"/>
<circle cx="1333.1" cy="97.3" r="8.8"/><path d="M1328.2 97.3 H1338 M1333.1 92.4 V102.2"/>
<path d="M1377.2 88.3 L1387.8 95.2 L1377.2 102.1 Z"/>
</g>
<g stroke="#d0d0d0" stroke-width="1.3">
<path d="M1409 100 Q1406.5 97 1407.5 93 Q1409 89.5 1413 89.5 H1417.5 M1415.5 87 L1418.5 89.5 L1415.5 92.3"/>
<path d="M1410 95 V99"/>
<path d="M1423.5 90.5 Q1426 93.5 1425 97.5 Q1423.5 101 1419.5 101 H1415 M1417 103.5 L1414 101 L1417 98.2"/>
<path d="M1422.5 95.5 V91.5"/>
</g>
<path d="M540.5 144.5 L535.5 149.6 L540.5 154.7 M1456.5 144.5 L1461.5 149.6 L1456.5 154.7" stroke="#e0e0e0" stroke-width="1.6"/>
<path d="M1427 127.3 H1440.4 L1433.7 138.5 Z" fill="#4fa3e0"/>
<rect x="1431.4" y="143.8" width="4.6" height="28" rx="2.3" fill="#4fa3e0"/>
<path d="M1429.7 180 H1437.4 L1433.55 173.2 Z" fill="#e34b9b"/>
</svg>
<div class="a" style="left:1063.7px;top:792px;width:100.0px;height:31.5px;background:#474747;"></div>
<div class="a" style="left:1263.6px;top:792px;width:100.0px;height:31.5px;background:#474747;"></div>
<div class="a" style="left:1063.7px;top:823.5px;width:100.0px;height:31.299999999999955px;background:#474747;"></div>
<div class="a" style="left:1263.6px;top:823.5px;width:100.0px;height:31.299999999999955px;background:#474747;"></div>
<div class="a" style="left:1063.7px;top:854.8px;width:100.0px;height:31.800000000000068px;background:#474747;"></div>
<div class="a" style="left:1263.6px;top:854.8px;width:100.0px;height:31.800000000000068px;background:#474747;"></div>
<div class="a" style="left:1063.7px;top:886.6px;width:100.0px;height:31.399999999999977px;background:#474747;"></div>
<div class="a" style="left:1263.6px;top:886.6px;width:100.0px;height:31.399999999999977px;background:#474747;"></div>
<div class="a" style="left:506px;top:918px;width:972px;height:30.799999999999955px;background:#1e3a57;"></div>
<div class="a" style="left:1063.7px;top:918px;width:100.0px;height:30.799999999999955px;background:#474747;"></div>
<div class="a" style="left:1263.6px;top:918px;width:100.0px;height:30.799999999999955px;background:#474747;"></div>
<svg class="a" style="left:0;top:0" width="1500" height="960" fill="none"><path d="M563.8 751.5 V948.8" stroke="#4d4d4d" stroke-width="1.3" stroke-linecap="butt"/><path d="M663.5 751.5 V948.8" stroke="#4d4d4d" stroke-width="1.3" stroke-linecap="butt"/><path d="M763.5 751.5 V948.8" stroke="#4d4d4d" stroke-width="1.3" stroke-linecap="butt"/><path d="M863.5 751.5 V948.8" stroke="#4d4d4d" stroke-width="1.3" stroke-linecap="butt"/><path d="M963.5 751.5 V948.8" stroke="#4d4d4d" stroke-width="1.3" stroke-linecap="butt"/><path d="M1063.7 751.5 V948.8" stroke="#4d4d4d" stroke-width="1.3" stroke-linecap="butt"/><path d="M1163.7 751.5 V948.8" stroke="#4d4d4d" stroke-width="1.3" stroke-linecap="butt"/><path d="M1263.6 751.5 V948.8" stroke="#4d4d4d" stroke-width="1.3" stroke-linecap="butt"/><path d="M1363.6 751.5 V948.8" stroke="#4d4d4d" stroke-width="1.3" stroke-linecap="butt"/><path d="M1463.4 751.5 V948.8" stroke="#4d4d4d" stroke-width="1.3" stroke-linecap="butt"/><path d="M506 751.5 H1478" stroke="#4d4d4d" stroke-width="1.3" stroke-linecap="butt"/><path d="M506 791.6 H1478" stroke="#4d4d4d" stroke-width="2" stroke-linecap="butt"/><path d="M506 823.5 H1478" stroke="#4d4d4d" stroke-width="1.3" stroke-linecap="butt"/><path d="M506 854.8 H1478" stroke="#4d4d4d" stroke-width="1.3" stroke-linecap="butt"/><path d="M506 886.6 H1478" stroke="#4d4d4d" stroke-width="1.3" stroke-linecap="butt"/><path d="M506 918 H1478" stroke="#4d4d4d" stroke-width="1.3" stroke-linecap="butt"/><path d="M506 948.8 H1478" stroke="#4d4d4d" stroke-width="1.3" stroke-linecap="butt"/></svg>
<div class="a" style="left:564px;top:918.4px;width:99px;height:30px;background:transparent;border:1.5px solid #5b9bd8"></div>
<div class="a" style="left:1476.5px;top:792px;width:7.5px;height:157px;background:#2f2f2f;"></div>
<div class="a" style="left:1477.5px;top:802.8px;width:6px;height:21.8px;background:#a8a8a8;border-radius:3px"></div>
<div class="a" style="left:506px;top:950.5px;width:972px;height:6px;background:#2f2f2f;"></div>
<div class="a" style="left:507px;top:950.6px;width:535px;height:6px;background:#a8a8a8;border-radius:3px"></div>
<div class="a" style="left:1477px;top:950.6px;width:7px;height:6px;background:#ffffff;"></div>
<svg class="a" style="left:0px;top:0px;" width="1500" height="960" viewBox="0 0 1500 960" fill="none" stroke-linecap="round" stroke-linejoin="round">
<path d="M677.4 707 V751.5 M722.6 707 V751.5 M1393.6 707 V751.5 M1438.5 707 V751.5" stroke="#4d4d4d" stroke-width="1.3"/>
<g stroke="#e0e0e0" stroke-width="1.6">
<path d="M692.5 723.2 H707.5 L702 731.5 V737.3 H698 V731.5 Z"/>
<circle cx="741.1" cy="723.8" r="2.1"/><circle cx="750.1" cy="729.2" r="2.1"/><circle cx="750.1" cy="735.3" r="2.1"/>
<path d="M741.1 726 V733.5 Q741.1 735.3 743 735.3 H748 M741.1 729.2 H748"/>
<rect x="1411.5" y="720.8" width="14.7" height="13" rx="1.5"/>
<path d="M1411.5 724.3 H1426.2"/>
<path d="M1407.6 725 V737.2 H1422.6"/>
<path d="M1456.5 723.2 L1467.5 734.4 M1467.5 723.2 L1456.5 734.4"/>
<path d="M614.6 776.5 L619.1 781 M623.6 776.5 L619.1 781 M619.1 764.8 V780.5" stroke="#c8c8c8" stroke-width="1.5"/>
</g>
<g fill="#e6e6e6"><circle cx="1370.2" cy="722.5" r="1.8"/><circle cx="1370.2" cy="729.3" r="1.8"/><circle cx="1370.2" cy="736" r="1.8"/></g>
</svg>
<div class="a" style="left:1497.9px;top:189px;width:77px;height:3.8px;background:#4fa3e0;"></div>
<svg class="a" style="left:0;top:0" width="1913" height="1012" fill="none"><path d="M1498 193.5 H1898" stroke="#4c4c4c" stroke-width="1.3" stroke-linecap="butt"/><path d="M1498 328.5 H1898" stroke="#4c4c4c" stroke-width="1.3" stroke-linecap="butt"/><path d="M1498 385.5 H1898" stroke="#4c4c4c" stroke-width="1.3" stroke-linecap="butt"/><path d="M1498 444 H1898" stroke="#4c4c4c" stroke-width="1.3" stroke-linecap="butt"/><path d="M1498 502.5 H1898" stroke="#4c4c4c" stroke-width="1.3" stroke-linecap="butt"/><path d="M1498 586.5 H1898" stroke="#4c4c4c" stroke-width="1.3" stroke-linecap="butt"/><path d="M1498 694.6 H1898" stroke="#4c4c4c" stroke-width="1.3" stroke-linecap="butt"/><path d="M1498 753.3 H1898" stroke="#4c4c4c" stroke-width="1.3" stroke-linecap="butt"/><path d="M1498 812 H1898" stroke="#4c4c4c" stroke-width="1.3" stroke-linecap="butt"/><path d="M1498 863 H1898" stroke="#4c4c4c" stroke-width="1.3" stroke-linecap="butt"/></svg>
<svg class="a" style="left:0px;top:0px;" width="1913" height="1012" viewBox="0 0 1913 1012" fill="none" stroke-linecap="round" stroke-linejoin="round">
<path d="M1617.63 86.16 L1617.87 83.78 L1620.13 83.78 L1620.37 86.16 L1623.37 87.89 L1625.56 86.91 L1626.68 88.86 L1624.74 90.27 L1624.74 93.73 L1626.68 95.14 L1625.56 97.09 L1623.37 96.11 L1620.37 97.84 L1620.13 100.22 L1617.87 100.22 L1617.63 97.84 L1614.63 96.11 L1612.44 97.09 L1611.32 95.14 L1613.26 93.73 L1613.26 90.27 L1611.32 88.86 L1612.44 86.91 L1614.63 87.89 Z" stroke="#e0e0e0" stroke-width="1.6"/><circle cx="1619" cy="92" r="2.9" stroke="#e0e0e0" stroke-width="1.6"/>
<g stroke="#e6e6e6" stroke-width="1.6">
<path d="M1849.4 86.3 A7.7 7.7 0 1 1 1850.7 94"/>
<path d="M1855.3 84.3 V88.6 L1858.8 91.2"/>
<path d="M1882.5 82.6 L1893.6 93.7 M1893.6 82.6 L1882.5 93.7" stroke-width="1.9"/>
</g>
<path d="M1846 87.8 H1852.5 L1849.2 92 Z" fill="#e6e6e6"/>
<g stroke="#d8d8d8" stroke-width="1.6">
<path d="M1806 134 L1808.6 131.4 Q1810.6 129.5 1812.6 131.4 Q1814.5 133.4 1812.6 135.4 L1809.6 138.4 Q1807.6 140.3 1805.6 138.4"/>
<path d="M1808 139 L1805.4 141.6 Q1803.4 143.5 1801.4 141.6 Q1799.5 139.6 1801.4 137.6 L1804.4 134.6 Q1806.4 132.7 1808.4 134.6"/>
</g>
<path d="M1831.6 171.5 V183.2 M1825.8 177.35 H1837.4" stroke="#4fa3e0" stroke-width="1.7"/>
<path d="M1884.2 176.2 L1888.7 181.39999999999998 L1893.2 176.2" stroke="#4fa3e0" stroke-width="1.5"/>
<path d="M1880.8 221.8 L1886.3 215 L1891.8 221.8" stroke="#4fa3e0" stroke-width="1.6"/>
<path d="M1881 354.6 L1886.0 360.40000000000003 L1891 354.6" stroke="#e0e0e0" stroke-width="1.6"/>
<path d="M1881 411.8 L1886.0 417.6 L1891 411.8" stroke="#e0e0e0" stroke-width="1.6"/>
<path d="M1881 470 L1886.0 475.8 L1891 470" stroke="#e0e0e0" stroke-width="1.6"/>
<path d="M1881 529 L1886.0 534.8 L1891 529" stroke="#e0e0e0" stroke-width="1.6"/>
<path d="M1880.6 614.0 L1886.1 607.2 L1891.6 614.0" stroke="#4fa3e0" stroke-width="1.6"/>
<path d="M1884.43 659.16 L1884.69 656.88 L1886.91 656.88 L1887.17 659.16 L1890.17 660.89 L1892.28 659.97 L1893.39 661.90 L1891.54 663.27 L1891.54 666.73 L1893.39 668.10 L1892.28 670.03 L1890.17 669.11 L1887.17 670.84 L1886.91 673.12 L1884.69 673.12 L1884.43 670.84 L1881.43 669.11 L1879.32 670.03 L1878.21 668.10 L1880.06 666.73 L1880.06 663.27 L1878.21 661.90 L1879.32 659.97 L1881.43 660.89 Z" stroke="#e0e0e0" stroke-width="1.6"/><circle cx="1885.8" cy="665" r="2.9" stroke="#e0e0e0" stroke-width="1.6"/>
<path d="M1881 720.8 L1886.0 726.5999999999999 L1891 720.8" stroke="#e0e0e0" stroke-width="1.6"/>
<path d="M1880.6 834 L1886.1 840.8 L1891.6 834" stroke="#4fa3e0" stroke-width="1.6"/>
<circle cx="1614.8" cy="532" r="7.3" stroke="#4a9ad6" stroke-width="1.5"/>
<path d="M1614.8 530.5 V536" stroke="#4a9ad6" stroke-width="1.6"/>
<circle cx="1614.8" cy="528" r="1" fill="#4a9ad6"/>
</svg>
<svg class="a" style="left:0px;top:0px;" width="1913" height="1012" viewBox="0 0 1913 1012" fill="none" stroke-linecap="round" stroke-linejoin="round">
<path d="M124.2 985.6 L129.1 980.2 L134.0 985.6" stroke="#e0e0e0" stroke-width="1.4"/>
<path d="M190.2 985.6 L195.1 980.2 L200.0 985.6" stroke="#e0e0e0" stroke-width="1.4"/>
<g fill="#e6e6e6"><circle cx="161.5" cy="972.8" r="4.2"/><circle cx="176" cy="976.5" r="6"/><circle cx="177.5" cy="990.6" r="3.3"/></g>
<circle cx="162" cy="989.2" r="5" stroke="#e6e6e6" stroke-width="1.8"/>
<g stroke="#e0e0e0" stroke-width="1.6">
<rect x="981.9" y="973.7" width="13.8" height="13.5" rx="2.8"/>
<path d="M985.5 987.2 V988.3 Q985.5 991.2 988.4 991.2 H997.4 Q1000.3 991.2 1000.3 988.3 V980.3 Q1000.3 977.4 997.5 977.4 H995.7"/>
</g>
<g stroke="#e6e6e6" stroke-width="1.9">
<rect x="1869" y="968.2" width="27" height="27" rx="3"/>
<path d="M1887.8 968.2 V995.2"/>
</g>
</svg>
<span class="t" style="left:327.6px;top:24.00px;font-size:14.3px;font-weight:400;color:#adadad;transform:scaleX(1.0960);">Cortina Sliding Centre</span>
<span class="t" style="left:697.5px;top:27.63px;font-size:14.5px;font-weight:400;color:#b0b0b0;transform:scaleX(1.0728);">Search Cortina Sliding Centre</span>
<span class="t" style="left:1438.4px;top:27.80px;font-size:14.3px;font-weight:400;color:#e6e6e6;transform:scaleX(0.9844);">CSC_Charts</span>
<span class="t" style="left:1869.7px;top:29.23px;font-size:13.2px;font-weight:400;color:#3a4868;transform:scaleX(0.9094);">FC</span>
<span class="t" style="left:22.5px;top:119.29px;font-size:12.3px;font-weight:700;color:#e2e2e2;transform:scaleX(1.0025);">Filters</span>
<span class="t" style="left:21.7px;top:199.99px;font-size:12.3px;font-weight:700;color:#e2e2e2;transform:scaleX(0.9568);">Assets</span>
<span class="t" style="left:27.35px;top:280.29px;font-size:12.3px;font-weight:700;color:#e2e2e2;transform:scaleX(0.9739);">Files</span>
<span class="t" style="left:27.2px;top:360.99px;font-size:12.3px;font-weight:700;color:#e2e2e2;transform:scaleX(0.9176);">Docs</span>
<span class="t" style="left:16.25px;top:442.49px;font-size:12.3px;font-weight:700;color:#4fa3e0;transform:scaleX(0.9784);">Systems</span>
<span class="t" style="left:4.700000000000003px;top:523.49px;font-size:12.3px;font-weight:700;color:#e2e2e2;transform:scaleX(0.9749);">Connections</span>
<span class="t" style="left:24.4px;top:603.39px;font-size:12.3px;font-weight:700;color:#e2e2e2;transform:scaleX(0.9711);">Users</span>
<span class="t" style="left:16.7px;top:817.39px;font-size:12.3px;font-weight:700;color:#e2e2e2;transform:scaleX(1.0011);">Streams</span>
<span class="t" style="left:19.2px;top:897.79px;font-size:12.3px;font-weight:700;color:#e2e2e2;transform:scaleX(1.0289);">History</span>
<span class="t" style="left:11.899999999999999px;top:978.39px;font-size:12.3px;font-weight:700;color:#4fa3e0;transform:scaleX(1.0513);">Inventory</span>
<span class="t" style="left:95px;top:84.96px;font-size:16px;font-weight:700;color:#e6e6e6;transform:scaleX(0.9965);">SYSTEMS</span>
<span class="t" style="left:450.2px;top:81.10px;font-size:15px;font-weight:400;color:#4fa3e0;transform:scaleX(0.9882);">Create</span>
<span class="t" style="left:146px;top:143.93px;font-size:14.5px;font-weight:400;color:#9c9c9c;transform:scaleX(0.8530);">Search</span>
<span class="t" style="left:108px;top:248.60px;font-size:14.3px;font-weight:700;color:#e0e0e0;transform:scaleX(0.9844);">MEP</span>
<span class="t" style="left:108px;top:269.77px;font-size:13.5px;font-weight:400;color:#4fa3e0;transform:scaleX(0.9314);">46</span>
<span class="t" style="left:108px;top:314.70px;font-size:14.3px;font-weight:700;color:#e0e0e0;transform:scaleX(0.9844);">MEP</span>
<span class="t" style="left:108px;top:336.77px;font-size:13.5px;font-weight:400;color:#4fa3e0;transform:scaleX(0.9314);">48</span>
<span class="t" style="left:602.5px;top:87.86px;font-size:18px;font-weight:400;color:#e2e2e2;transform:scaleX(1.0018);">Tuesday, February 3, 2026</span>
<span class="t" style="left:831.4px;top:88.29px;font-size:17.5px;font-weight:700;color:#ececec;transform:scaleX(0.9955);">11:56 AM GMT+1</span>
<span class="t" style="left:1015.5px;top:89.60px;font-size:15px;font-weight:400;color:#e2e2e2;transform:scaleX(0.9807);">Live</span>
<span class="t" style="left:1150px;top:89.68px;font-size:15.5px;font-weight:400;color:#e2e2e2;transform:scaleX(0.9889);">Last 3 days</span>
<span class="t" style="left:1449.9px;top:91.42px;font-size:12.5px;font-weight:400;color:#e2e2e2;transform:scaleX(0.9089);">1x</span>
<span class="t" style="left:596.1800000000001px;top:177.62px;font-size:13.8px;font-weight:400;color:#dedede;transform:scaleX(1.0573);">4PM</span>
<span class="t" style="left:689.6400000000001px;top:177.62px;font-size:13.8px;font-weight:400;color:#dedede;transform:scaleX(1.0487);">Feb 1</span>
<span class="t" style="left:789.6px;top:177.62px;font-size:13.8px;font-weight:400;color:#dedede;transform:scaleX(1.0925);">8AM</span>
<span class="t" style="left:887.06px;top:177.62px;font-size:13.8px;font-weight:400;color:#dedede;transform:scaleX(1.0573);">4PM</span>
<span class="t" style="left:980.52px;top:177.62px;font-size:13.8px;font-weight:400;color:#dedede;transform:scaleX(1.0487);">Feb 2</span>
<span class="t" style="left:1080.48px;top:177.62px;font-size:13.8px;font-weight:400;color:#dedede;transform:scaleX(1.0925);">8AM</span>
<span class="t" style="left:1177.94px;top:177.62px;font-size:13.8px;font-weight:400;color:#dedede;transform:scaleX(1.0573);">4PM</span>
<span class="t" style="left:1271.4px;top:177.62px;font-size:13.8px;font-weight:400;color:#dedede;transform:scaleX(1.0487);">Feb 3</span>
<span class="t" style="left:1371.3600000000001px;top:177.62px;font-size:13.8px;font-weight:400;color:#dedede;transform:scaleX(1.0925);">8AM</span>
<span class="t" style="left:520.1px;top:723.33px;font-size:14.5px;font-weight:700;color:#e0e0e0;transform:scaleX(1.0506);">INVENTORY (90769)</span>
<span class="t" style="left:569.4px;top:763.80px;font-size:14.3px;font-weight:400;color:#80d2c8;transform:scaleX(1.0409);">Name</span>
<span class="t" style="left:669.1px;top:763.80px;font-size:14.3px;font-weight:400;color:#80d2c8;transform:scaleX(1.0384);">Level</span>
<span class="t" style="left:769.1px;top:763.80px;font-size:14.3px;font-weight:400;color:#80d2c8;transform:scaleX(0.9934);">Rooms</span>
<span class="t" style="left:869.1px;top:763.80px;font-size:14.3px;font-weight:400;color:#80d2c8;transform:scaleX(1.0226);">Tandem...</span>
<span class="t" style="left:969.1px;top:763.80px;font-size:14.3px;font-weight:400;color:#80d2c8;transform:scaleX(1.0378);">Classific...</span>
<span class="t" style="left:1069.3px;top:763.80px;font-size:14.3px;font-weight:400;color:#80d2c8;transform:scaleX(1.0100);">Assemb...</span>
<span class="t" style="left:1169.3px;top:763.80px;font-size:14.3px;font-weight:400;color:#80d2c8;transform:scaleX(1.0355);">Categor...</span>
<span class="t" style="left:1269.1999999999998px;top:763.80px;font-size:14.3px;font-weight:400;color:#80d2c8;transform:scaleX(1.1049);">Elevation</span>
<span class="t" style="left:1369.1999999999998px;top:763.80px;font-size:14.3px;font-weight:400;color:#80d2c8;transform:scaleX(0.8951);">GUID</span>
<span class="t" style="left:1469.0px;top:763.80px;font-size:14.3px;font-weight:400;color:#80d2c8;transform:scaleX(0.9588);">Sc</span>
<span class="t" style="left:513.7px;top:800.90px;font-size:14px;font-weight:400;color:#9a9a9a;transform:scaleX(1.0913);">7461</span>
<span class="t" style="left:569.0px;top:800.65px;font-size:14.3px;font-weight:400;color:#e6e6e6;transform:scaleX(0.9877);">STR_ArcTel...</span>
<span class="t" style="left:668.7px;top:800.65px;font-size:14.3px;font-weight:400;color:#e6e6e6;transform:scaleX(1.0469);">1 - Piano P...</span>
<span class="t" style="left:868.7px;top:800.65px;font-size:14.3px;font-weight:400;color:#e6e6e6;transform:scaleX(1.0782);">B (Building...</span>
<span class="t" style="left:1168.9px;top:800.65px;font-size:14.3px;font-weight:400;color:#ababab;transform:scaleX(1.0846);">Structural ...</span>
<span class="t" style="left:1368.8px;top:800.65px;font-size:14.3px;font-weight:400;color:#ababab;transform:scaleX(1.0660);">88da0eda-...</span>
<span class="t" style="left:1468.6000000000001px;top:800.65px;font-size:14.3px;font-weight:400;color:#ababab;transform:scaleX(1.0039);">I</span>
<span class="t" style="left:513.7px;top:832.30px;font-size:14px;font-weight:400;color:#9a9a9a;transform:scaleX(1.0913);">7462</span>
<span class="t" style="left:569.0px;top:832.05px;font-size:14.3px;font-weight:400;color:#e6e6e6;transform:scaleX(0.9877);">STR_ArcTel...</span>
<span class="t" style="left:668.7px;top:832.05px;font-size:14.3px;font-weight:400;color:#e6e6e6;transform:scaleX(1.0469);">1 - Piano P...</span>
<span class="t" style="left:868.7px;top:832.05px;font-size:14.3px;font-weight:400;color:#e6e6e6;transform:scaleX(1.0782);">B (Building...</span>
<span class="t" style="left:1168.9px;top:832.05px;font-size:14.3px;font-weight:400;color:#ababab;transform:scaleX(1.0846);">Structural ...</span>
<span class="t" style="left:1368.8px;top:832.05px;font-size:14.3px;font-weight:400;color:#ababab;transform:scaleX(1.0660);">88da0eda-...</span>
<span class="t" style="left:1468.6000000000001px;top:832.05px;font-size:14.3px;font-weight:400;color:#ababab;transform:scaleX(1.0039);">I</span>
<span class="t" style="left:513.7px;top:863.85px;font-size:14px;font-weight:400;color:#9a9a9a;transform:scaleX(1.0913);">7463</span>
<span class="t" style="left:569.0px;top:863.60px;font-size:14.3px;font-weight:400;color:#e6e6e6;transform:scaleX(0.9877);">STR_ArcTel...</span>
<span class="t" style="left:668.7px;top:863.60px;font-size:14.3px;font-weight:400;color:#e6e6e6;transform:scaleX(1.0469);">1 - Piano P...</span>
<span class="t" style="left:868.7px;top:863.60px;font-size:14.3px;font-weight:400;color:#e6e6e6;transform:scaleX(1.0782);">B (Building...</span>
<span class="t" style="left:1168.9px;top:863.60px;font-size:14.3px;font-weight:400;color:#ababab;transform:scaleX(1.0846);">Structural ...</span>
<span class="t" style="left:1368.8px;top:863.60px;font-size:14.3px;font-weight:400;color:#ababab;transform:scaleX(1.0660);">88da0eda-...</span>
<span class="t" style="left:1468.6000000000001px;top:863.60px;font-size:14.3px;font-weight:400;color:#ababab;transform:scaleX(1.0039);">I</span>
<span class="t" style="left:513.7px;top:895.45px;font-size:14px;font-weight:400;color:#9a9a9a;transform:scaleX(1.0913);">7464</span>
<span class="t" style="left:569.0px;top:895.20px;font-size:14.3px;font-weight:400;color:#e6e6e6;transform:scaleX(0.9877);">STR_ArcTel...</span>
<span class="t" style="left:668.7px;top:895.20px;font-size:14.3px;font-weight:400;color:#e6e6e6;transform:scaleX(1.0469);">1 - Piano P...</span>
<span class="t" style="left:868.7px;top:895.20px;font-size:14.3px;font-weight:400;color:#e6e6e6;transform:scaleX(1.0782);">B (Building...</span>
<span class="t" style="left:1168.9px;top:895.20px;font-size:14.3px;font-weight:400;color:#ababab;transform:scaleX(1.0846);">Structural ...</span>
<span class="t" style="left:1368.8px;top:895.20px;font-size:14.3px;font-weight:400;color:#ababab;transform:scaleX(1.0660);">88da0eda-...</span>
<span class="t" style="left:1468.6000000000001px;top:895.20px;font-size:14.3px;font-weight:400;color:#ababab;transform:scaleX(1.0039);">I</span>
<span class="t" style="left:513.7px;top:926.55px;font-size:14px;font-weight:400;color:#9a9a9a;transform:scaleX(1.0913);">7465</span>
<span class="t" style="left:569.0px;top:926.30px;font-size:14.3px;font-weight:400;color:#e6e6e6;transform:scaleX(0.9877);">STR_ArcTel...</span>
<span class="t" style="left:668.7px;top:926.30px;font-size:14.3px;font-weight:400;color:#e6e6e6;transform:scaleX(1.0469);">1 - Piano P...</span>
<span class="t" style="left:868.7px;top:926.30px;font-size:14.3px;font-weight:400;color:#e6e6e6;transform:scaleX(1.0782);">B (Building...</span>
<span class="t" style="left:1168.9px;top:926.30px;font-size:14.3px;font-weight:400;color:#ababab;transform:scaleX(1.0846);">Structural ...</span>
<span class="t" style="left:1368.8px;top:926.30px;font-size:14.3px;font-weight:400;color:#ababab;transform:scaleX(1.0660);">88da0eda-...</span>
<span class="t" style="left:1468.6000000000001px;top:926.30px;font-size:14.3px;font-weight:400;color:#ababab;transform:scaleX(1.0039);">I</span>
<span class="t" style="left:1497.9px;top:84.43px;font-size:16.5px;font-weight:700;color:#e6e6e6;transform:scaleX(0.9778);">PROPERTIES</span>
<span class="t" style="left:1497.9px;top:130.55px;font-size:15.3px;font-weight:400;color:#e0e0e0;transform:scaleX(1.0196);">Structural Framing : STR_ArcTel_100x100</span>
<span class="t" style="left:1497.9px;top:169.56px;font-size:17.3px;font-weight:400;color:#4fa3e0;transform:scaleX(0.9433);">ELEMENT</span>
<span class="t" style="left:1600.3px;top:169.56px;font-size:17.3px;font-weight:700;color:#e6e6e6;transform:scaleX(0.8928);">TYPE</span>
<span class="t" style="left:1846.6px;top:171.08px;font-size:15.5px;font-weight:400;color:#4fa3e0;transform:scaleX(0.9640);">Add</span>
<span class="t" style="left:1497.9px;top:210.81px;font-size:17px;font-weight:700;color:#e6e6e6;transform:scaleX(0.9416);">ASSET PROPERTIES</span>
<span class="t" style="left:1498px;top:272.10px;font-size:14.3px;font-weight:700;color:#e6e6e6;transform:scaleX(0.9846);">Common</span>
<span class="t" style="left:1497.9px;top:303.90px;font-size:15px;font-weight:400;color:#b4b4b4;transform:scaleX(1.0046);">Name</span>
<span class="t" style="left:1697.5px;top:303.90px;font-size:15px;font-weight:400;color:#e8e8e8;transform:scaleX(1.0245);">STR_ArcTel_100x100</span>
<span class="t" style="left:1497.9px;top:349.90px;font-size:15px;font-weight:400;color:#b4b4b4;transform:scaleX(0.9900);">Level</span>
<span class="t" style="left:1697.5px;top:349.90px;font-size:15px;font-weight:400;color:#e8e8e8;transform:scaleX(1.0496);">1 - Piano Primo</span>
<span class="t" style="left:1497.9px;top:407.50px;font-size:15px;font-weight:400;color:#b4b4b4;transform:scaleX(1.0354);">Tandem Category</span>
<span class="t" style="left:1697.5px;top:407.50px;font-size:15px;font-weight:400;color:#e8e8e8;transform:scaleX(1.0704);">Building Element</span>
<span class="t" style="left:1497.9px;top:465.60px;font-size:15px;font-weight:400;color:#b4b4b4;transform:scaleX(1.0012);">System Class</span>
<span class="t" style="left:1697.5px;top:465.60px;font-size:15px;font-weight:400;color:#9e9e9e;transform:scaleX(1.0157);">Select System Class</span>
<span class="t" style="left:1497.9px;top:524.70px;font-size:15px;font-weight:400;color:#b4b4b4;transform:scaleX(1.0614);">Classification</span>
<span class="t" style="left:1697.5px;top:514.50px;font-size:15px;font-weight:400;color:#9e9e9e;transform:scaleX(1.0412);">Select Simple</span>
<span class="t" style="left:1697.5px;top:534.70px;font-size:15px;font-weight:400;color:#9e9e9e;transform:scaleX(1.0242);">Categories</span>
<span class="t" style="left:1497.8px;top:602.23px;font-size:16.5px;font-weight:700;color:#e6e6e6;transform:scaleX(1.0300);">RELATIONSHIPS</span>
<span class="t" style="left:1497.9px;top:657.50px;font-size:15px;font-weight:400;color:#b4b4b4;transform:scaleX(1.0972);">Connections</span>
<span class="t" style="left:1697.5px;top:657.50px;font-size:15px;font-weight:400;color:#e8e8e8;transform:scaleX(1.0536);">Select Connection(s)</span>
<span class="t" style="left:1497.9px;top:716.50px;font-size:15px;font-weight:400;color:#b4b4b4;transform:scaleX(0.9997);">Rooms</span>
<span class="t" style="left:1697.5px;top:716.50px;font-size:15px;font-weight:400;color:#e8e8e8;transform:scaleX(1.0401);">Select Room(s)</span>
<span class="t" style="left:1497.9px;top:762.70px;font-size:15px;font-weight:400;color:#b4b4b4;transform:scaleX(1.0571);">Systems</span>
<span class="t" style="left:1698.3px;top:762.70px;font-size:15px;font-weight:400;color:#e8e8e8;transform:scaleX(1.0315);">No Assigned Systems</span>
<span class="t" style="left:1497.8px;top:828.23px;font-size:16.5px;font-weight:700;color:#e6e6e6;transform:scaleX(1.0017);">DESIGN PROPERTIES</span>
<span class="t" style="left:1015.8px;top:974.95px;font-size:14px;font-weight:400;color:#e2e2e2;transform:scaleX(1.1102);">Auto View</span>
<span class="t" style="left:92.8px;top:971.94px;font-size:18.5px;font-weight:700;color:#e6e6e6;transform:scaleX(0.9160);">Ab</span>
</div></div>
</body></html>
